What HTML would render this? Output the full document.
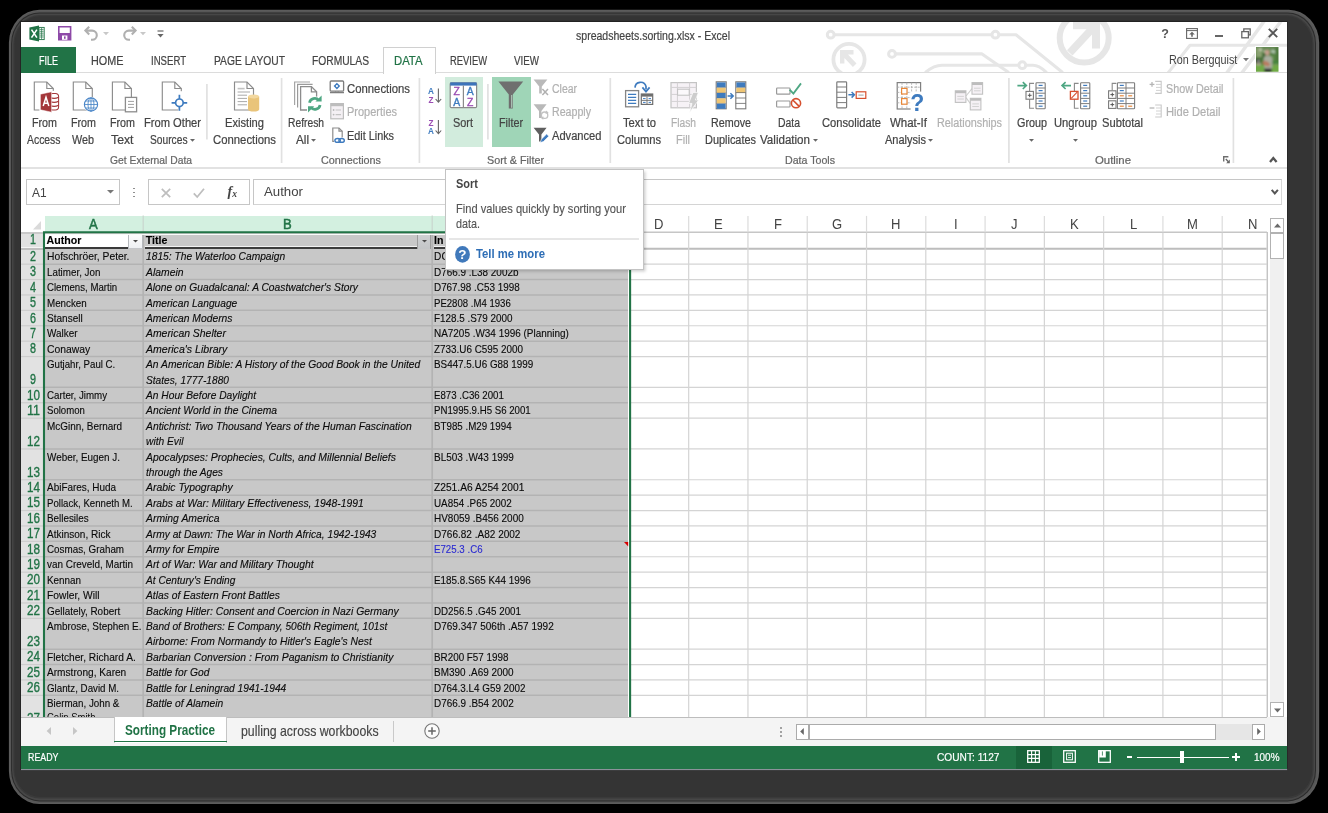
<!DOCTYPE html>
<html><head><meta charset="utf-8"><title>Excel</title>
<style>
html,body{margin:0;padding:0;background:#000;}
body{width:1328px;height:813px;position:relative;overflow:hidden;font-family:"Liberation Sans",sans-serif;}
.t{position:absolute;white-space:nowrap;margin:0;padding:0;}
.r{position:absolute;box-sizing:border-box;}
svg{overflow:visible}
</style></head><body><div id="root" style="position:absolute;left:0;top:0;width:1328px;height:813px;will-change:transform;">
<svg class="r" style="left:0;top:0" width="1328" height="813" viewBox="0 0 1328 813"><rect x="8.90" y="9.80" width="1310.30" height="794.20" rx="30.5" ry="33.0" fill="#5c5c5c"/><rect x="9.80" y="11.00" width="1307.80" height="792.10" rx="29.7" ry="32.2" fill="#575757"/><rect x="11.10" y="12.40" width="1304.90" height="789.00" rx="28.5" ry="31.0" fill="#2b2b2b"/><rect x="12.10" y="13.40" width="1302.90" height="787.00" rx="27.5" ry="30.0" fill="#474747"/><rect x="13.30" y="15.00" width="1300.30" height="783.40" rx="26.5" ry="29.0" fill="#3a3a3a"/><rect x="14.50" y="16.20" width="1297.70" height="780.80" rx="25.5" ry="28.0" fill="#343434"/><rect x="20.2" y="20.9" width="1267.4" height="749" fill="#222222"/><rect x="21" y="768.8" width="1266.2" height="1.3" fill="#8c929a"/></svg>
<div class="r" style="left:21.00px;top:22.00px;width:1266.00px;height:747.00px;background:#ffffff;"></div>
<svg class="r" style="left:21px;top:22px;overflow:hidden" width="1266" height="51" viewBox="21 22 1266 51"><g><g fill="none" stroke="#e6e6e6" stroke-width="3.1" stroke-linecap="round" stroke-linejoin="round">
<path d="M834.5 34.7 H991.5 M999.3 34.7 H1016 L1062 72"/>
<circle cx="830.7" cy="34.7" r="3.4" stroke-width="3"/>
<circle cx="995.4" cy="34.7" r="3.4" stroke-width="3"/>
<path d="M896 53.9 H982 L1008 72"/>
<circle cx="892" cy="53.9" r="3.4" stroke-width="3"/>
<path d="M926 72 Q934 65.2 942 65.2 H1018.5 M1026 65.2 H1033 Q1039 65.2 1046 72"/>
<circle cx="1022.3" cy="65.2" r="3.4" stroke-width="3"/>
<circle cx="849" cy="59.5" r="15.6" stroke-width="3.8"/>
<circle cx="1084.2" cy="38" r="24.5" stroke-width="6"/>
<path d="M1168 73 L1190 45.3 H1288" stroke-width="3"/>
<path d="M1226 74 L1265 20" stroke-width="3.4"/>
<path d="M1241 74 L1282 20" stroke-width="3.4"/>
</g>
<g fill="#e6e6e6" stroke="none">
<path d="M840 50 h13.5 v4.5 h-5.5 l8.5 9 -3.6 3.4 -8.5 -9 v5.6 h-4.4z"/>
<path d="M1073 22 h27 v26.5 h-8 v-14 l-19.5 21 -5.5 -5.2 19.5 -21 h-13.5z"/>
</g></g></svg>
<div class="t" style="left:576.00px;top:27.60px;font-size:12px;line-height:16px;color:#444;font-weight:normal;font-style:normal;transform:scaleX(0.8780);transform-origin:0 50%;-webkit-text-stroke:0.2px;">spreadsheets.sorting.xlsx - Excel</div>
<svg class="r" style="left:29.40px;top:24.60px;" width="16" height="17" viewBox="0 0 16 17"><path d="M0.4 2.4 L10 0.4 V16.6 L0.4 14.6Z" fill="#217346"/>
<rect x="10" y="2.4" width="5.2" height="12.2" fill="#fff" stroke="#217346" stroke-width="0.9"/>
<path d="M10.6 4.4h4M10.6 6.3h4M10.6 8.2h4M10.6 10.1h4M10.6 12h4M12.6 2.8v11.4" stroke="#217346" stroke-width="0.7"/>
<path d="M2.5 4.6 L7.9 12.6 M7.9 4.6 L2.5 12.6" stroke="#fff" stroke-width="1.6"/></svg>
<svg class="r" style="left:58.00px;top:26.00px;" width="14" height="15" viewBox="0 0 14 15"><path d="M0.8 0.8 H12.6 V13.8 H0.8Z" fill="#fff" stroke="#8e4aa8" stroke-width="1.6"/>
<rect x="0.8" y="7" width="11.8" height="6.8" fill="#8e4aa8"/><rect x="4" y="9.5" width="5.4" height="4.3" fill="#fff"/><rect x="6" y="10.4" width="1.6" height="2.4" fill="#8e4aa8"/></svg>
<svg class="r" style="left:84.00px;top:26.00px;" width="16" height="16" viewBox="0 0 16 16"><path d="M1.5 4.6 H8.2 A4.6 4.6 0 0 1 8.2 13.8 H7" fill="none" stroke="#b0b0b0" stroke-width="2.1"/><path d="M5.2 0.8 L1.4 4.6 L5.2 8.4" fill="none" stroke="#b0b0b0" stroke-width="2.1"/></svg>
<svg class="r" style="left:103.00px;top:32.00px;" width="6" height="4" viewBox="0 0 6 4"><path d="M0 0H6L3 3.2Z" fill="#c8c8c8"/></svg>
<svg class="r" style="left:121.00px;top:26.00px;" width="16" height="16" viewBox="0 0 16 16"><path d="M14.5 4.6 H7.8 A4.6 4.6 0 0 0 7.8 13.8 H9" fill="none" stroke="#b0b0b0" stroke-width="2.1"/><path d="M10.8 0.8 L14.6 4.6 L10.8 8.4" fill="none" stroke="#b0b0b0" stroke-width="2.1"/></svg>
<svg class="r" style="left:140.00px;top:32.00px;" width="6" height="4" viewBox="0 0 6 4"><path d="M0 0H6L3 3.2Z" fill="#c8c8c8"/></svg>
<svg class="r" style="left:157.00px;top:30.00px;" width="7" height="9" viewBox="0 0 7 9"><path d="M0.5 1H6.5" stroke="#666" stroke-width="1.2"/><path d="M0.4 4H6.6L3.5 7.4Z" fill="#666"/></svg>
<div class="t" style="left:1161.18px;top:26.00px;font-size:12.5px;line-height:16px;color:#555;font-weight:bold;font-style:normal;">?</div>
<svg class="r" style="left:1186.00px;top:28.00px;" width="12" height="11" viewBox="0 0 12 11"><rect x="0.6" y="0.6" width="10.8" height="9.8" fill="#fff" stroke="#666" stroke-width="1.1"/><path d="M0.6 2.6H11.4" stroke="#666" stroke-width="1"/><path d="M6 3.8 L8.8 6.6 H6.8 V8.8 H5.2 V6.6 H3.2Z" fill="#666"/></svg>
<div class="r" style="left:1214.50px;top:34.50px;width:8.50px;height:2.00px;background:#666;"></div>
<svg class="r" style="left:1241.00px;top:28.00px;" width="10" height="11" viewBox="0 0 10 11"><rect x="2.8" y="0.9" width="6.4" height="6" fill="none" stroke="#666" stroke-width="1.3"/><rect x="0.8" y="3.6" width="6.6" height="6.2" fill="#fff" stroke="#666" stroke-width="1.3"/></svg>
<svg class="r" style="left:1268.20px;top:28.20px;" width="10" height="10" viewBox="0 0 10 10"><path d="M0.8 0.8L9.2 9.2M9.2 0.8L0.8 9.2" stroke="#555" stroke-width="1.9"/></svg>
<div class="t" style="left:1168.80px;top:51.50px;font-size:12.2px;line-height:16px;color:#444;font-weight:normal;font-style:normal;transform:scaleX(0.8848);transform-origin:0 50%;">Ron Bergquist</div>
<svg class="r" style="left:1243.00px;top:58.00px;" width="6" height="4" viewBox="0 0 6 4"><path d="M0 0H6L3 3.2Z" fill="#777"/></svg>
<div class="r" style="left:1254.50px;top:46.30px;width:24.50px;height:26.80px;background:#ffffff;"></div>
<svg class="r" style="left:1255.50px;top:47.30px;" width="22.5" height="24.8" viewBox="0 0 22.5 24.8"><defs><filter id="avb" x="-5%" y="-5%" width="110%" height="110%"><feGaussianBlur stdDeviation="0.8"/></filter><clipPath id="avc"><rect width="22.5" height="24.8"/></clipPath></defs>
<g clip-path="url(#avc)"><g filter="url(#avb)">
<rect x="-2" y="-2" width="27" height="29" fill="#4f7a3c"/>
<rect x="-2" y="-2" width="27" height="7" fill="#668a55"/><rect x="5" y="6" width="5" height="6" fill="#3f6a34"/><rect x="13" y="8" width="6" height="6" fill="#5d8d4a"/>
<rect x="0" y="1" width="6" height="9" fill="#88a070"/>
<rect x="3.5" y="1.5" width="2" height="2.4" fill="#d9dcc8"/><rect x="7.5" y="3.4" width="1.6" height="2" fill="#cfd4bd"/>
<rect x="15" y="3" width="5" height="3" fill="#a9c1a6"/><rect x="18.5" y="4.5" width="1.6" height="2.4" fill="#e4ebe4"/>
<rect x="19" y="0" width="4" height="16" fill="#4d7a3c"/>
<rect x="0" y="12" width="3.6" height="4" fill="#1f241c"/><rect x="1.6" y="13.3" width="1.4" height="1.6" fill="#e8e8e8"/>
<rect x="17" y="14.5" width="6" height="2.6" fill="#3f8a3a"/>
<rect x="16" y="17.6" width="7" height="1.6" fill="#c7a7a0"/>
<rect x="-1" y="18" width="25" height="8" fill="#6faa45"/>
<rect x="0" y="16" width="5" height="2.4" fill="#a8a58a"/>
<ellipse cx="11.3" cy="5.6" rx="2.3" ry="2.9" fill="#c79f8f"/>
<path d="M7.6 11 Q9 8.4 11.4 8.8 Q15.6 8.4 16.4 11.6 L16 22 H8.6Z" fill="#a9ad9f"/>
<path d="M6.2 15 L10 13.8 L14 16.6 L13.4 19.4 L8 18.6Z" fill="#b97c61"/>
<rect x="8.4" y="21.6" width="7.2" height="3.6" fill="#26262a"/>
</g></g></svg>
<div class="r" style="left:21.00px;top:47.20px;width:55.00px;height:25.80px;background:#217346;"></div>
<div class="r" style="left:76.00px;top:71.80px;width:1211.00px;height:1.60px;background:#dcdcdc;"></div>
<div class="r" style="left:382.60px;top:46.80px;width:53.20px;height:27.00px;background:#ffffff;border:1px solid #d0d0d0;border-bottom:none;"></div>
<div class="t" style="left:38.80px;top:52.60px;font-size:12.3px;line-height:16px;color:#ffffff;font-weight:normal;font-style:normal;transform:scaleX(0.7314);transform-origin:0 50%;-webkit-text-stroke:0.22px;">FILE</div>
<div class="t" style="left:91.20px;top:52.60px;font-size:12.3px;line-height:16px;color:#444444;font-weight:normal;font-style:normal;transform:scaleX(0.8808);transform-origin:0 50%;-webkit-text-stroke:0.22px;">HOME</div>
<div class="t" style="left:151.10px;top:52.60px;font-size:12.3px;line-height:16px;color:#444444;font-weight:normal;font-style:normal;transform:scaleX(0.7798);transform-origin:0 50%;-webkit-text-stroke:0.22px;">INSERT</div>
<div class="t" style="left:213.50px;top:52.60px;font-size:12.3px;line-height:16px;color:#444444;font-weight:normal;font-style:normal;transform:scaleX(0.8354);transform-origin:0 50%;-webkit-text-stroke:0.22px;">PAGE LAYOUT</div>
<div class="t" style="left:312.00px;top:52.60px;font-size:12.3px;line-height:16px;color:#444444;font-weight:normal;font-style:normal;transform:scaleX(0.8340);transform-origin:0 50%;-webkit-text-stroke:0.22px;">FORMULAS</div>
<div class="t" style="left:393.80px;top:52.60px;font-size:12.3px;line-height:16px;color:#217346;font-weight:normal;font-style:normal;transform:scaleX(0.9199);transform-origin:0 50%;-webkit-text-stroke:0.22px;">DATA</div>
<div class="t" style="left:450.30px;top:52.60px;font-size:12.3px;line-height:16px;color:#444444;font-weight:normal;font-style:normal;transform:scaleX(0.7625);transform-origin:0 50%;-webkit-text-stroke:0.22px;">REVIEW</div>
<div class="t" style="left:513.60px;top:52.60px;font-size:12.3px;line-height:16px;color:#444444;font-weight:normal;font-style:normal;transform:scaleX(0.7953);transform-origin:0 50%;-webkit-text-stroke:0.22px;">VIEW</div>
<div class="r" style="left:21.00px;top:166.80px;width:1266.00px;height:2.20px;background:#e2e2e2;"></div>
<svg class="r" style="left:0;top:0" width="1328" height="813" viewBox="0 0 1328 813"><path d="M281.6 78V163" stroke="#e1e1e1" stroke-width="1.7"/><path d="M419.4 78V163" stroke="#e1e1e1" stroke-width="1.7"/><path d="M610.3 78V163" stroke="#e1e1e1" stroke-width="1.7"/><path d="M1008.9 78V163" stroke="#e1e1e1" stroke-width="1.7"/><path d="M1233.4 78V163" stroke="#e1e1e1" stroke-width="1.7"/><path d="M206.9 84V139.5" stroke="#e1e1e1" stroke-width="1.7"/><path d="M487.9 84V139.5" stroke="#e1e1e1" stroke-width="1.7"/></svg>
<div class="r" style="left:444.50px;top:76.50px;width:38.60px;height:70.50px;background:#d2ecdd;"></div>
<div class="r" style="left:492.00px;top:76.50px;width:38.50px;height:70.50px;background:#9fd5b7;"></div>
<div class="t" style="left:31.50px;top:115.20px;font-size:12.5px;line-height:16px;color:#444444;font-weight:normal;font-style:normal;transform:scaleX(0.8573);transform-origin:0 50%;-webkit-text-stroke:0.22px;">From</div>
<div class="t" style="left:27.25px;top:131.50px;font-size:12.5px;line-height:16px;color:#444444;font-weight:normal;font-style:normal;transform:scaleX(0.8315);transform-origin:0 50%;-webkit-text-stroke:0.22px;">Access</div>
<div class="t" style="left:70.50px;top:115.20px;font-size:12.5px;line-height:16px;color:#444444;font-weight:normal;font-style:normal;transform:scaleX(0.8573);transform-origin:0 50%;-webkit-text-stroke:0.22px;">From</div>
<div class="t" style="left:72.00px;top:131.50px;font-size:12.5px;line-height:16px;color:#444444;font-weight:normal;font-style:normal;transform:scaleX(0.8636);transform-origin:0 50%;-webkit-text-stroke:0.22px;">Web</div>
<div class="t" style="left:109.50px;top:115.20px;font-size:12.5px;line-height:16px;color:#444444;font-weight:normal;font-style:normal;transform:scaleX(0.8573);transform-origin:0 50%;-webkit-text-stroke:0.22px;">From</div>
<div class="t" style="left:110.75px;top:131.50px;font-size:12.5px;line-height:16px;color:#444444;font-weight:normal;font-style:normal;transform:scaleX(0.9815);transform-origin:0 50%;-webkit-text-stroke:0.22px;">Text</div>
<div class="t" style="left:143.50px;top:115.20px;font-size:12.5px;line-height:16px;color:#444444;font-weight:normal;font-style:normal;transform:scaleX(0.8920);transform-origin:0 50%;-webkit-text-stroke:0.22px;">From Other</div>
<div class="t" style="left:149.75px;top:131.50px;font-size:12.5px;line-height:16px;color:#444444;font-weight:normal;font-style:normal;transform:scaleX(0.8178);transform-origin:0 50%;-webkit-text-stroke:0.22px;">Sources</div>
<svg class="r" style="left:189.75px;top:139.00px;" width="5" height="3" viewBox="0 0 5 3"><path d="M0 0H5L2.5 2.8Z" fill="#666"/></svg>
<div class="t" style="left:224.50px;top:115.20px;font-size:12.5px;line-height:16px;color:#444444;font-weight:normal;font-style:normal;transform:scaleX(0.8911);transform-origin:0 50%;-webkit-text-stroke:0.22px;">Existing</div>
<div class="t" style="left:212.50px;top:131.50px;font-size:12.5px;line-height:16px;color:#444444;font-weight:normal;font-style:normal;transform:scaleX(0.9067);transform-origin:0 50%;-webkit-text-stroke:0.22px;">Connections</div>
<div class="t" style="left:287.50px;top:115.20px;font-size:12.5px;line-height:16px;color:#444444;font-weight:normal;font-style:normal;transform:scaleX(0.8225);transform-origin:0 50%;-webkit-text-stroke:0.22px;">Refresh</div>
<div class="t" style="left:295.50px;top:131.50px;font-size:12.5px;line-height:16px;color:#444444;font-weight:normal;font-style:normal;transform:scaleX(0.9359);transform-origin:0 50%;-webkit-text-stroke:0.22px;">All</div>
<svg class="r" style="left:311.00px;top:139.00px;" width="5" height="3" viewBox="0 0 5 3"><path d="M0 0H5L2.5 2.8Z" fill="#666"/></svg>
<div class="t" style="left:453.00px;top:115.20px;font-size:12.5px;line-height:16px;color:#444444;font-weight:normal;font-style:normal;transform:scaleX(0.8724);transform-origin:0 50%;-webkit-text-stroke:0.22px;">Sort</div>
<div class="t" style="left:499.00px;top:115.20px;font-size:12.5px;line-height:16px;color:#444444;font-weight:normal;font-style:normal;transform:scaleX(0.8640);transform-origin:0 50%;-webkit-text-stroke:0.22px;">Filter</div>
<div class="t" style="left:622.50px;top:115.20px;font-size:12.5px;line-height:16px;color:#444444;font-weight:normal;font-style:normal;transform:scaleX(0.8962);transform-origin:0 50%;-webkit-text-stroke:0.22px;">Text to</div>
<div class="t" style="left:617.00px;top:131.50px;font-size:12.5px;line-height:16px;color:#444444;font-weight:normal;font-style:normal;transform:scaleX(0.8921);transform-origin:0 50%;-webkit-text-stroke:0.22px;">Columns</div>
<div class="t" style="left:670.50px;top:115.20px;font-size:12.5px;line-height:16px;color:#b1b1b1;font-weight:normal;font-style:normal;transform:scaleX(0.8179);transform-origin:0 50%;-webkit-text-stroke:0.22px;">Flash</div>
<div class="t" style="left:676.00px;top:131.50px;font-size:12.5px;line-height:16px;color:#b1b1b1;font-weight:normal;font-style:normal;transform:scaleX(0.8769);transform-origin:0 50%;-webkit-text-stroke:0.22px;">Fill</div>
<div class="t" style="left:710.50px;top:115.20px;font-size:12.5px;line-height:16px;color:#444444;font-weight:normal;font-style:normal;transform:scaleX(0.8594);transform-origin:0 50%;-webkit-text-stroke:0.22px;">Remove</div>
<div class="t" style="left:705.00px;top:131.50px;font-size:12.5px;line-height:16px;color:#444444;font-weight:normal;font-style:normal;transform:scaleX(0.8739);transform-origin:0 50%;-webkit-text-stroke:0.22px;">Duplicates</div>
<div class="t" style="left:777.50px;top:115.20px;font-size:12.5px;line-height:16px;color:#444444;font-weight:normal;font-style:normal;transform:scaleX(0.8332);transform-origin:0 50%;-webkit-text-stroke:0.22px;">Data</div>
<div class="t" style="left:760.00px;top:131.50px;font-size:12.5px;line-height:16px;color:#444444;font-weight:normal;font-style:normal;transform:scaleX(0.9264);transform-origin:0 50%;-webkit-text-stroke:0.22px;">Validation</div>
<svg class="r" style="left:812.50px;top:139.00px;" width="5" height="3" viewBox="0 0 5 3"><path d="M0 0H5L2.5 2.8Z" fill="#666"/></svg>
<div class="t" style="left:822.00px;top:115.20px;font-size:12.5px;line-height:16px;color:#444444;font-weight:normal;font-style:normal;transform:scaleX(0.8938);transform-origin:0 50%;-webkit-text-stroke:0.22px;">Consolidate</div>
<div class="t" style="left:890.00px;top:115.20px;font-size:12.5px;line-height:16px;color:#444444;font-weight:normal;font-style:normal;transform:scaleX(0.9185);transform-origin:0 50%;-webkit-text-stroke:0.22px;">What-If</div>
<div class="t" style="left:884.50px;top:131.50px;font-size:12.5px;line-height:16px;color:#444444;font-weight:normal;font-style:normal;transform:scaleX(0.8809);transform-origin:0 50%;-webkit-text-stroke:0.22px;">Analysis</div>
<svg class="r" style="left:928.00px;top:139.00px;" width="5" height="3" viewBox="0 0 5 3"><path d="M0 0H5L2.5 2.8Z" fill="#666"/></svg>
<div class="t" style="left:937.00px;top:115.20px;font-size:12.5px;line-height:16px;color:#b1b1b1;font-weight:normal;font-style:normal;transform:scaleX(0.8662);transform-origin:0 50%;-webkit-text-stroke:0.22px;">Relationships</div>
<div class="t" style="left:1016.50px;top:115.20px;font-size:12.5px;line-height:16px;color:#444444;font-weight:normal;font-style:normal;transform:scaleX(0.8635);transform-origin:0 50%;-webkit-text-stroke:0.22px;">Group</div>
<svg class="r" style="left:1029.00px;top:138.50px;" width="5" height="3" viewBox="0 0 5 3"><path d="M0 0H5L2.5 2.8Z" fill="#666"/></svg>
<div class="t" style="left:1054.00px;top:115.20px;font-size:12.5px;line-height:16px;color:#444444;font-weight:normal;font-style:normal;transform:scaleX(0.8968);transform-origin:0 50%;-webkit-text-stroke:0.22px;">Ungroup</div>
<svg class="r" style="left:1073.00px;top:138.50px;" width="5" height="3" viewBox="0 0 5 3"><path d="M0 0H5L2.5 2.8Z" fill="#666"/></svg>
<div class="t" style="left:1101.50px;top:115.20px;font-size:12.5px;line-height:16px;color:#444444;font-weight:normal;font-style:normal;transform:scaleX(0.8939);transform-origin:0 50%;-webkit-text-stroke:0.22px;">Subtotal</div>
<div class="t" style="left:347.00px;top:80.60px;font-size:12.5px;line-height:16px;color:#444444;font-weight:normal;font-style:normal;transform:scaleX(0.9067);transform-origin:0 50%;-webkit-text-stroke:0.22px;">Connections</div>
<div class="t" style="left:347.00px;top:104.40px;font-size:12.5px;line-height:16px;color:#b1b1b1;font-weight:normal;font-style:normal;transform:scaleX(0.8777);transform-origin:0 50%;-webkit-text-stroke:0.22px;">Properties</div>
<div class="t" style="left:347.00px;top:128.00px;font-size:12.5px;line-height:16px;color:#444444;font-weight:normal;font-style:normal;transform:scaleX(0.8673);transform-origin:0 50%;-webkit-text-stroke:0.22px;">Edit Links</div>
<div class="t" style="left:551.50px;top:80.60px;font-size:12.5px;line-height:16px;color:#b1b1b1;font-weight:normal;font-style:normal;transform:scaleX(0.8370);transform-origin:0 50%;-webkit-text-stroke:0.22px;">Clear</div>
<div class="t" style="left:551.50px;top:104.40px;font-size:12.5px;line-height:16px;color:#b1b1b1;font-weight:normal;font-style:normal;transform:scaleX(0.8504);transform-origin:0 50%;-webkit-text-stroke:0.22px;">Reapply</div>
<div class="t" style="left:551.50px;top:128.00px;font-size:12.5px;line-height:16px;color:#444444;font-weight:normal;font-style:normal;transform:scaleX(0.8904);transform-origin:0 50%;-webkit-text-stroke:0.22px;">Advanced</div>
<div class="t" style="left:1165.50px;top:80.60px;font-size:12.5px;line-height:16px;color:#b1b1b1;font-weight:normal;font-style:normal;transform:scaleX(0.8621);transform-origin:0 50%;-webkit-text-stroke:0.22px;">Show Detail</div>
<div class="t" style="left:1165.50px;top:104.40px;font-size:12.5px;line-height:16px;color:#b1b1b1;font-weight:normal;font-style:normal;transform:scaleX(0.8915);transform-origin:0 50%;-webkit-text-stroke:0.22px;">Hide Detail</div>
<div class="t" style="left:110.00px;top:152.60px;font-size:11px;line-height:14px;color:#666666;font-weight:normal;font-style:normal;transform:scaleX(0.9379);transform-origin:0 50%;-webkit-text-stroke:0.22px;">Get External Data</div>
<div class="t" style="left:320.50px;top:152.60px;font-size:11px;line-height:14px;color:#666666;font-weight:normal;font-style:normal;transform:scaleX(0.9812);transform-origin:0 50%;-webkit-text-stroke:0.22px;">Connections</div>
<div class="t" style="left:486.50px;top:152.60px;font-size:11px;line-height:14px;color:#666666;font-weight:normal;font-style:normal;transform:scaleX(0.9816);transform-origin:0 50%;-webkit-text-stroke:0.22px;">Sort &amp; Filter</div>
<div class="t" style="left:784.50px;top:152.60px;font-size:11px;line-height:14px;color:#666666;font-weight:normal;font-style:normal;transform:scaleX(0.9658);transform-origin:0 50%;-webkit-text-stroke:0.22px;">Data Tools</div>
<div class="t" style="left:1095.00px;top:152.60px;font-size:11px;line-height:14px;color:#666666;font-weight:normal;font-style:normal;transform:scaleX(1.0330);transform-origin:0 50%;-webkit-text-stroke:0.22px;">Outline</div>
<svg class="r" style="left:1223.00px;top:156.20px;" width="7" height="7.4" viewBox="0 0 7 7.4"><path d="M0.7 5.4V0.7H5.4" fill="none" stroke="#6e6e6e" stroke-width="1.4"/><path d="M2.8 3L5.4 5.8" fill="none" stroke="#666" stroke-width="1.3"/><path d="M6.8 3.6V7.2H3.2Z" fill="#666"/></svg>
<svg class="r" style="left:1269.30px;top:155.60px;" width="8.6" height="7" viewBox="0 0 8.6 7"><path d="M1 6L4.3 2L7.6 6" fill="none" stroke="#555" stroke-width="2.3"/></svg>
<svg class="r" style="left:0;top:0" width="1328" height="813" viewBox="0 0 1328 813"><path d="M34.3 82H46.8L53.3 88.5V110H34.3Z" fill="#fff" stroke="#8c8c8c" stroke-width="1.15" stroke-linejoin="miter"/><path d="M46.8 82V88.5H53.3" fill="none" stroke="#8c8c8c" stroke-width="1.15"/><rect x="39.4" y="90.8" width="20.6" height="22.4" fill="#fff"/><rect x="49.6" y="93.4" width="9" height="16.6" rx="3.2" fill="#fff" stroke="#a4373a" stroke-width="1.05"/><path d="M49.6 97.2 Q54.1 99.6 58.6 97.2 M49.6 101.2 Q54.1 103.6 58.6 101.2 M49.6 105.2 Q54.1 107.6 58.6 105.2" fill="none" stroke="#a4373a" stroke-width="1.05"/><path d="M40.4 94.2 L51.6 91.8 V112.2 L40.4 109.8Z" fill="#a4373a" stroke="#fff" stroke-width="0.5"/><path d="M43.2 106 L46 97.2 L48.8 106 M44.2 103.2H47.8" fill="none" stroke="#fff" stroke-width="1.5"/><path d="M73.3 82H85.8L92.3 88.5V110H73.3Z" fill="#fff" stroke="#8c8c8c" stroke-width="1.15" stroke-linejoin="miter"/><path d="M85.8 82V88.5H92.3" fill="none" stroke="#8c8c8c" stroke-width="1.15"/><circle cx="91" cy="104.5" r="7.6" fill="#fff"/><circle cx="91" cy="104.5" r="6.6" fill="#fff" stroke="#4a86c8" stroke-width="1.15"/><ellipse cx="91" cy="104.5" rx="3" ry="6.6" fill="none" stroke="#4a86c8" stroke-width="0.85"/><path d="M84.4 104.5H97.6M85.6 101H96.4M85.6 108H96.4M91 97.9V111.1" stroke="#4a86c8" stroke-width="0.85"/><path d="M112.4 82H124.9L131.4 88.5V110H112.4Z" fill="#fff" stroke="#8c8c8c" stroke-width="1.15" stroke-linejoin="miter"/><path d="M124.9 82V88.5H131.4" fill="none" stroke="#8c8c8c" stroke-width="1.15"/><rect x="125.4" y="97.4" width="11.2" height="14.4" fill="#fff" stroke="#8c8c8c" stroke-width="1.3"/><path d="M128 101.4H134M128 104.4H134M128 107.4H134" stroke="#a0a0a0" stroke-width="1"/><path d="M162.3 82H174.8L181.3 88.5V110H162.3Z" fill="#fff" stroke="#8c8c8c" stroke-width="1.15" stroke-linejoin="miter"/><path d="M174.8 82V88.5H181.3" fill="none" stroke="#8c8c8c" stroke-width="1.15"/><rect x="178.2" y="91.2" width="10" height="20.4" fill="#fff"/><circle cx="179.4" cy="102.8" r="3.8" fill="#fff" stroke="#3e7bbf" stroke-width="1.7"/><path d="M179.4 94.8V99M179.4 106.6V110.8M171.6 102.8H175.6M183.2 102.8H187.2" stroke="#3e7bbf" stroke-width="1.7"/><path d="M234.5 82H247.0L253.5 88.5V110H234.5Z" fill="#fff" stroke="#8c8c8c" stroke-width="1.15" stroke-linejoin="miter"/><path d="M247.0 82V88.5H253.5" fill="none" stroke="#8c8c8c" stroke-width="1.15"/><path d="M237.6 88.6H244.6" stroke="#c2c2c2" stroke-width="1.6"/><path d="M237.6 92H250M237.6 95.2H247M237.6 98.4H247M237.6 101.6H247M237.6 104.8H247" stroke="#a9a9a9" stroke-width="1"/><path d="M248 96.4 V109.6 A5.6 2 0 0 0 259.2 109.6 V96.4Z" fill="#e9c47a"/><ellipse cx="253.6" cy="96.4" rx="5.6" ry="2" fill="#f3d89f"/><path d="M294.6 105V82H310" fill="none" stroke="#a5a5a5" stroke-width="1.2"/><path d="M297.6 107.5V84.4H312.6" fill="none" stroke="#9a9a9a" stroke-width="1.2"/><path d="M300.6 86.6H311.40000000000003L316.6 91.8V110.0H300.6Z" fill="#fff" stroke="#8c8c8c" stroke-width="1.3" stroke-linejoin="miter"/><path d="M311.40000000000003 86.6V91.8H316.6" fill="none" stroke="#8c8c8c" stroke-width="1.3"/><rect x="307" y="96.6" width="15.4" height="15" fill="#fff"/><path d="M309.5 102.8 A5.3 5.3 0 0 1 318.8 100.4" fill="none" stroke="#4ea783" stroke-width="2.7"/><path d="M315.4 101.6H321.6V95.4Z" fill="#4ea783"/><path d="M320.1 105 A5.3 5.3 0 0 1 310.8 107.4" fill="none" stroke="#4ea783" stroke-width="2.7"/><path d="M314.2 106.2H308V112.4Z" fill="#4ea783"/><rect x="330.2" y="81" width="13.4" height="10.2" rx="1" fill="#fff" stroke="#7d7d7d" stroke-width="1.3"/><path d="M330 92.6H344M335.6 91.4V92.6M338.2 91.4V92.6" stroke="#7d7d7d" stroke-width="1.3"/><path d="M336.9 82.8 L340.2 86.1 L336.9 89.4 L333.6 86.1Z" fill="#3e7bbf"/><circle cx="336.9" cy="86.1" r="1.1" fill="#fff"/><rect x="330.8" y="103.6" width="12.6" height="15.2" fill="#f4f0f4" stroke="#bdbdbd" stroke-width="1.2"/><rect x="330.8" y="103.6" width="12.6" height="2.6" fill="#bdbdbd"/><path d="M335.6 110H341M335.6 114.6H341" stroke="#c4c4c4" stroke-width="1.2"/><circle cx="333.6" cy="110" r="0.9" fill="#b9b9b9"/><circle cx="333.6" cy="114.6" r="0.9" fill="#b9b9b9"/><path d="M332.8 128H339.0L342.2 131.2V141.4H332.8Z" fill="#fff" stroke="#8c8c8c" stroke-width="1.2" stroke-linejoin="miter"/><path d="M339.0 128V131.2H342.2" fill="none" stroke="#8c8c8c" stroke-width="1.2"/><rect x="334" y="137.4" width="12" height="6.4" fill="#fff"/><ellipse cx="337.6" cy="140.4" rx="2.7" ry="1.9" fill="none" stroke="#3e7bbf" stroke-width="1.4"/><ellipse cx="341.6" cy="140.4" rx="2.7" ry="1.9" fill="none" stroke="#3e7bbf" stroke-width="1.4"/><text x="431" y="94.4" font-family="Liberation Sans" font-size="8.2" font-weight="bold" fill="#3e7bbf" text-anchor="middle">A</text><text x="431" y="102.80000000000001" font-family="Liberation Sans" font-size="8.2" font-weight="bold" fill="#9a4db3" text-anchor="middle">Z</text><path d="M438.4 88.4V102.0M435.6 99.0L438.4 102.2L441.2 99.0" fill="none" stroke="#666" stroke-width="1.1"/><text x="431" y="125.9" font-family="Liberation Sans" font-size="8.2" font-weight="bold" fill="#9a4db3" text-anchor="middle">Z</text><text x="431" y="134.3" font-family="Liberation Sans" font-size="8.2" font-weight="bold" fill="#3e7bbf" text-anchor="middle">A</text><path d="M438.4 119.9V133.5M435.6 130.5L438.4 133.70000000000002L441.2 130.5" fill="none" stroke="#666" stroke-width="1.1"/><rect x="450.2" y="82.8" width="26.4" height="24.8" rx="1.2" fill="#fff" stroke="#8a8a8a" stroke-width="1.2"/><rect x="450.2" y="82.4" width="26.4" height="3.2" fill="#3c74ba"/><path d="M463.4 85.6V107.6" stroke="#8a8a8a" stroke-width="1.2"/><text x="456.7" y="95.4" font-family="Liberation Sans" font-size="10.4" fill="#9a4db3" stroke="#9a4db3" stroke-width="0.35" text-anchor="middle">Z</text><text x="456.7" y="106" font-family="Liberation Sans" font-size="10.4" fill="#3e7bbf" stroke="#3e7bbf" stroke-width="0.35" text-anchor="middle">A</text><text x="470.1" y="95.4" font-family="Liberation Sans" font-size="10.4" fill="#3e7bbf" stroke="#3e7bbf" stroke-width="0.35" text-anchor="middle">A</text><text x="470.1" y="106" font-family="Liberation Sans" font-size="10.4" fill="#9a4db3" stroke="#9a4db3" stroke-width="0.35" text-anchor="middle">Z</text><path d="M498.4 81.6H523.2L512.8 94.4V108.6H508.8V94.4Z" fill="#6f6f6f"/><path d="M511.7 95V107.8" fill="none" stroke="#b5cfc0" stroke-width="1"/><path d="M533.6 79.4H547.4L541.8 86.4V93.6H539.2V86.4Z" fill="#b9b9b9"/><path d="M542.4 89L548 95M548 89L542.4 95" stroke="#b0b0b0" stroke-width="1.5"/><path d="M533.6 104.2H546.6L541.4 111V118H539V111Z" fill="#b9b9b9"/><circle cx="544.6" cy="115.2" r="3.2" fill="#fff" stroke="#c2c2c2" stroke-width="1.3"/><path d="M546 110.6L548.6 112.6L545.6 114Z" fill="#c2c2c2"/><path d="M543.2 119.8L540.6 117.8L543.6 116.4Z" fill="#c2c2c2"/><path d="M533.6 127.8H546.6L541.4 134.6V141.6H539V134.6Z" fill="#5f5f5f"/><path d="M540.4 142.6L541.2 139.4L546.6 134L548.8 136.2L543.4 141.6Z" fill="#3e7bbf" stroke="#fff" stroke-width="0.6"/><rect x="625.6" y="90.6" width="13" height="16.2" fill="#fff" stroke="#858585" stroke-width="1.3"/><path d="M628 94.4H636.2M628 97.4H636.2M628 100.4H636.2M628 103.4H636.2" stroke="#3e7bbf" stroke-width="1.1"/><rect x="641.3" y="94" width="11.4" height="10.4" fill="#fff" stroke="#6e6e6e" stroke-width="1.2"/><rect x="641.3" y="94" width="11.4" height="2.6" fill="#6e6e6e"/><path d="M647 96.6V104.4M641.3 100.4H652.7" stroke="#6e6e6e" stroke-width="0.9"/><path d="M643 98.6H645.6M648.6 98.6H651M643 102.4H645.6M648.6 102.4H651" stroke="#3e7bbf" stroke-width="1"/><path d="M635 87.6 A5.6 5.6 0 0 1 646 86.4 V89.6" fill="none" stroke="#3e7bbf" stroke-width="1.7"/><path d="M642.4 87.4L646 91.6L649.6 87.4" fill="none" stroke="#3e7bbf" stroke-width="1.7"/><rect x="671" y="82.6" width="25.4" height="25.2" fill="#f6f2f6" stroke="#c4c4c4" stroke-width="1.2"/><path d="M671 87.4H696.4M671 94.4H696.4M671 101.4H696.4M677.4 82.6V107.8M689.6 82.6V107.8" stroke="#d3d0d3" stroke-width="1"/><rect x="677.6" y="89.2" width="11.6" height="6" fill="#fbf9fb" stroke="#c0c0c0" stroke-width="1"/><path d="M693 92.4H698.4L695.4 100H698.6L689.6 112.4L692 103.4H688.6Z" fill="#cdcdcd" stroke="#fff" stroke-width="0.7"/><rect x="716.2" y="81.8" width="10" height="27" fill="#fff" stroke="#7a7a7a" stroke-width="1.1"/><rect x="716.8000000000001" y="82.40" width="8.8" height="5.2" fill="#3e7bbf"/><rect x="716.8000000000001" y="87.70" width="8.8" height="5.2" fill="#f0c674"/><rect x="716.8000000000001" y="93.00" width="8.8" height="5.2" fill="#3e7bbf"/><rect x="716.8000000000001" y="98.30" width="8.8" height="5.2" fill="#f0c674"/><rect x="716.8000000000001" y="103.60" width="8.8" height="5.2" fill="#3e7bbf"/><path d="M716.2 87.20H726.2" stroke="#6a6a6a" stroke-width="0.9" opacity="0.35"/><path d="M716.2 92.60H726.2" stroke="#6a6a6a" stroke-width="0.9" opacity="0.35"/><path d="M716.2 98.00H726.2" stroke="#6a6a6a" stroke-width="0.9" opacity="0.35"/><path d="M716.2 103.40H726.2" stroke="#6a6a6a" stroke-width="0.9" opacity="0.35"/><rect x="735.8" y="81.8" width="10" height="27" fill="#fff" stroke="#7a7a7a" stroke-width="1.1"/><rect x="736.4" y="82.40" width="8.8" height="5.2" fill="#3e7bbf"/><rect x="736.4" y="87.70" width="8.8" height="5.2" fill="#f0c674"/><path d="M735.8 87.20H745.8" stroke="#6a6a6a" stroke-width="0.9" opacity="0.35"/><path d="M735.8 92.60H745.8" stroke="#6a6a6a" stroke-width="0.9" opacity="0.9"/><path d="M735.8 98.00H745.8" stroke="#6a6a6a" stroke-width="0.9" opacity="0.9"/><path d="M735.8 103.40H745.8" stroke="#6a6a6a" stroke-width="0.9" opacity="0.9"/><path d="M727.6 96H732.6M730.4 93.2L733.2 96L730.4 98.8" fill="none" stroke="#3e7bbf" stroke-width="1.5"/><rect x="776.6" y="88" width="13.4" height="6.2" rx="0.8" fill="#fff" stroke="#9a9a9a" stroke-width="1.2"/><rect x="776.6" y="101" width="13.4" height="6" rx="0.8" fill="#fff" stroke="#9a9a9a" stroke-width="1.2"/><path d="M789.6 89.6L793.4 93.6L801 83.4" fill="none" stroke="#4ea783" stroke-width="1.8"/><circle cx="796" cy="103.2" r="4.6" fill="#fff" stroke="#d6502f" stroke-width="1.6"/><path d="M792.8 100L799.2 106.4" stroke="#d6502f" stroke-width="1.6"/><rect x="836.8" y="81.8" width="9.8" height="26" rx="0.8" fill="#fff" stroke="#7d7d7d" stroke-width="1.2"/><path d="M836.8 87H846.6M836.8 92.2H846.6M836.8 97.4H846.6M836.8 102.6H846.6" stroke="#7d7d7d" stroke-width="1"/><path d="M848.4 94.8H854M851.6 92L854.4 94.8L851.6 97.6" fill="none" stroke="#3e7bbf" stroke-width="1.5"/><rect x="856.2" y="91.8" width="9.6" height="6.6" fill="#fff" stroke="#d6502f" stroke-width="1.2"/><path d="M858.4 95.1H863.6" stroke="#a0a0a0" stroke-width="1"/><rect x="897.2" y="82.6" width="23.4" height="26.4" fill="#fff" stroke="#808080" stroke-width="1.2"/><path d="M897.2 87.2H920.6M897.2 92.4H920.6M897.2 97.6H920.6M897.2 102.8H920.6M902 82.6V109M906.8 82.6V109M911.6 82.6V109M916.2 82.6V109" stroke="#a8a8a8" stroke-width="0.8" stroke-dasharray="2.2 1.2"/><rect x="901.6" y="88.4" width="5.4" height="5.6" fill="#fff" stroke="#e8883a" stroke-width="1.2"/><rect x="901.6" y="98.6" width="5.4" height="5.6" fill="#fff" stroke="#e8883a" stroke-width="1.2"/><rect x="910.6" y="91.6" width="13.6" height="20.6" fill="#fff"/><text x="917.4" y="110.6" font-family="Liberation Sans" font-size="23" font-weight="bold" fill="#3e7bbf" text-anchor="middle">?</text><path d="M966 96 L972 88.6 M966 97.6 L970.4 103.6" stroke="#cfcfcf" stroke-width="1.1"/><rect x="955.3" y="90.8" width="10.6" height="11.6" fill="#f5f1f5" stroke="#c2c2c2" stroke-width="1.1"/><rect x="955.3" y="90.8" width="10.6" height="2.4" fill="#bdbdbd"/><path d="M957.3 96.39999999999999H963.9M957.3 99.0H963.9" stroke="#cfcfcf" stroke-width="0.9"/><rect x="972" y="82.6" width="10.6" height="11.6" fill="#f5f1f5" stroke="#c2c2c2" stroke-width="1.1"/><rect x="972" y="82.6" width="10.6" height="2.4" fill="#bdbdbd"/><path d="M974 88.19999999999999H980.6M974 90.8H980.6" stroke="#cfcfcf" stroke-width="0.9"/><rect x="970.3" y="98.3" width="10.6" height="11.6" fill="#f5f1f5" stroke="#c2c2c2" stroke-width="1.1"/><rect x="970.3" y="98.3" width="10.6" height="2.4" fill="#bdbdbd"/><path d="M972.3 103.89999999999999H978.9M972.3 106.5H978.9" stroke="#cfcfcf" stroke-width="0.9"/><rect x="1036" y="82.8" width="9.2" height="26" rx="0.8" fill="#fff" stroke="#7d7d7d" stroke-width="1.1"/><path d="M1036 88H1045.2M1036 93.2H1045.2M1036 98.4H1045.2M1036 103.6H1045.2" stroke="#7d7d7d" stroke-width="1"/><path d="M1038.6 85.4H1042.6000000000001" stroke="#3e7bbf" stroke-width="1.2"/><path d="M1038.6 90.6H1042.6000000000001" stroke="#3e7bbf" stroke-width="1.2"/><path d="M1038.6 95.8H1042.6000000000001" stroke="#3e7bbf" stroke-width="1.2"/><path d="M1038.6 101.0H1042.6000000000001" stroke="#3e7bbf" stroke-width="1.2"/><path d="M1038.6 106.2H1042.6000000000001" stroke="#3e7bbf" stroke-width="1.2"/><path d="M1034 83.4H1029.6V108.2H1034" fill="none" stroke="#8a8a8a" stroke-width="1.1"/><rect x="1026" y="91.4" width="7.4" height="7.8" fill="#fff" stroke="#7a7a7a" stroke-width="1.1"/><path d="M1027.8 95.3H1031.6M1029.7 93.4V97.2" stroke="#555" stroke-width="1"/><path d="M1017.4 85.6H1026M1022.8 82.2L1026.4 85.6L1022.8 89" fill="none" stroke="#4ea783" stroke-width="1.6"/><rect x="1080.6" y="82.8" width="9.2" height="26" rx="0.8" fill="#fff" stroke="#7d7d7d" stroke-width="1.1"/><path d="M1080.6 88H1089.8M1080.6 93.2H1089.8M1080.6 98.4H1089.8M1080.6 103.6H1089.8" stroke="#7d7d7d" stroke-width="1"/><path d="M1083.1999999999998 85.4H1087.2" stroke="#3e7bbf" stroke-width="1.2"/><path d="M1083.1999999999998 90.6H1087.2" stroke="#3e7bbf" stroke-width="1.2"/><path d="M1083.1999999999998 95.8H1087.2" stroke="#3e7bbf" stroke-width="1.2"/><path d="M1083.1999999999998 101.0H1087.2" stroke="#3e7bbf" stroke-width="1.2"/><path d="M1083.1999999999998 106.2H1087.2" stroke="#3e7bbf" stroke-width="1.2"/><path d="M1078.6 83.4H1074.4V108.2H1078.6" fill="none" stroke="#8a8a8a" stroke-width="1.1"/><rect x="1070.4" y="91.4" width="7.6" height="7.8" fill="#fff" stroke="#d6502f" stroke-width="1.3"/><path d="M1071.2 98.4L1077.2 92.2" stroke="#d6502f" stroke-width="1.1"/><path d="M1071 85.6H1062.4M1065.6 82.2L1062 85.6L1065.6 89" fill="none" stroke="#4ea783" stroke-width="1.6"/><rect x="1117.4" y="82.8" width="17.2" height="26" rx="0.8" fill="#fff" stroke="#7d7d7d" stroke-width="1.1"/><path d="M1117.4 88H1134.6M1117.4 93.2H1134.6M1117.4 98.4H1134.6M1117.4 103.6H1134.6M1126 82.8V108.8" stroke="#7d7d7d" stroke-width="1"/><path d="M1119.8 85.4H1123.8" stroke="#3e7bbf" stroke-width="1.2"/><path d="M1119.8 90.6H1123.8" stroke="#3e7bbf" stroke-width="1.2"/><path d="M1119.8 95.8H1123.8" stroke="#e8883a" stroke-width="1.2"/><path d="M1128.2 95.8H1132.2" stroke="#e8883a" stroke-width="1.2"/><path d="M1119.8 101.0H1123.8" stroke="#3e7bbf" stroke-width="1.2"/><path d="M1119.8 106.2H1123.8" stroke="#e8883a" stroke-width="1.2"/><path d="M1128.2 106.2H1132.2" stroke="#e8883a" stroke-width="1.2"/><path d="M1116.4 83.4H1112.2V90.6" fill="none" stroke="#8a8a8a" stroke-width="1.1"/><rect x="1108.6" y="90.8" width="7.4" height="7.6" fill="#fff" stroke="#7a7a7a" stroke-width="1.1"/><path d="M1110.4 94.6H1114.2M1112.3 92.7V96.5" stroke="#555" stroke-width="1"/><rect x="1108.6" y="100.8" width="7.4" height="7.6" fill="#fff" stroke="#7a7a7a" stroke-width="1.1"/><path d="M1110.4 104.6H1114.2M1112.3 102.7V106.5" stroke="#555" stroke-width="1"/><path d="M1155.2 81.39999999999999H1161.2V93.39999999999999H1155.2" fill="none" stroke="#c9c9c9" stroke-width="1.1"/><path d="M1156 84.39999999999999H1161M1156 87.39999999999999H1161M1156 90.39999999999999H1161" stroke="#d3d3d3" stroke-width="1"/><path d="M1149.6 84.39999999999999H1154.4" stroke="#b5b5b5" stroke-width="1.3"/><path d="M1152 82.0V86.8" stroke="#b5b5b5" stroke-width="1.3"/><path d="M1155.2 105.0H1161.2V117.0H1155.2" fill="none" stroke="#c9c9c9" stroke-width="1.1"/><path d="M1156 108.0H1161M1156 111.0H1161M1156 114.0H1161" stroke="#d3d3d3" stroke-width="1"/><path d="M1149.6 108.0H1154.4" stroke="#b5b5b5" stroke-width="1.3"/></svg>
<div class="r" style="left:26.00px;top:179.00px;width:94.00px;height:25.60px;background:#fff;border:1px solid #c6c6c6;"></div>
<div class="t" style="left:32.30px;top:183.80px;font-size:13px;line-height:17px;color:#444;font-weight:normal;font-style:normal;transform:scaleX(0.9182);transform-origin:0 50%;">A1</div>
<svg class="r" style="left:106.50px;top:190.00px;" width="7" height="4" viewBox="0 0 7 4"><path d="M0 0H7L3.5 3.6Z" fill="#777"/></svg>
<div class="r" style="left:133.00px;top:187.60px;width:1.90px;height:1.90px;background:#8f8f8f;"></div>
<div class="r" style="left:133.00px;top:191.60px;width:1.90px;height:1.90px;background:#8f8f8f;"></div>
<div class="r" style="left:133.00px;top:195.60px;width:1.90px;height:1.90px;background:#8f8f8f;"></div>
<div class="r" style="left:148.00px;top:179.00px;width:101.50px;height:25.60px;background:#fff;border:1px solid #c6c6c6;"></div>
<svg class="r" style="left:160.50px;top:187.50px;" width="10" height="10" viewBox="0 0 10 10"><path d="M0.8 0.8L9.2 9.2M9.2 0.8L0.8 9.2" stroke="#bebebe" stroke-width="1.7"/></svg>
<svg class="r" style="left:193.00px;top:187.50px;" width="12" height="10" viewBox="0 0 12 10"><path d="M0.8 5.4L4.2 9L11 0.8" fill="none" stroke="#bebebe" stroke-width="1.8"/></svg>
<div class="t" style="left:227.40px;top:182.80px;font-size:14px;line-height:18px;color:#444;font-weight:bold;font-style:italic;font-family:'Liberation Serif',serif;">f</div>
<div class="t" style="left:232.20px;top:188.40px;font-size:9.5px;line-height:12px;color:#444;font-weight:bold;font-style:italic;font-family:'Liberation Serif',serif;">x</div>
<div class="r" style="left:253.00px;top:179.00px;width:1029.00px;height:25.60px;background:#fff;border:1px solid #c6c6c6;border-right-color:#d8d8d8;border-bottom-color:#d4d4d4;"></div>
<div class="t" style="left:264.00px;top:184.30px;font-size:12.5px;line-height:16px;color:#444;font-weight:normal;font-style:normal;transform:scaleX(1.0590);transform-origin:0 50%;">Author</div>
<svg class="r" style="left:1270.90px;top:188.90px;" width="7.6" height="6" viewBox="0 0 7.6 6"><path d="M0.7 0.9L3.8 4.5L6.9 0.9" fill="none" stroke="#555" stroke-width="2"/></svg>
<div class="r" style="left:21.00px;top:215.60px;width:1246.00px;height:16.70px;background:#ffffff;"></div>
<div class="r" style="left:44.60px;top:215.60px;width:584.80px;height:17.20px;background:#d3f0e0;"></div>
<div class="r" style="left:21.00px;top:232.30px;width:22.30px;height:484.90px;background:#e2e2e2;"></div>
<div class="r" style="left:43.30px;top:232.30px;width:1223.70px;height:484.90px;background:#ffffff;"></div>
<div class="r" style="left:43.30px;top:232.30px;width:586.10px;height:484.90px;background:#c8c8c8;"></div>
<div class="r" style="left:45.00px;top:234.00px;width:83.40px;height:13.60px;background:#ffffff;"></div>
<svg class="r" style="left:0;top:0" width="1328" height="813" viewBox="0 0 1328 813"><path d="M629.40 248.75L1267.00 248.75" stroke="#bdbdbd" stroke-width="1.8"/><path d="M629.40 264.15L1267.00 264.15" stroke="#d4d4d4" stroke-width="1.2"/><path d="M629.40 279.55L1267.00 279.55" stroke="#d4d4d4" stroke-width="1.2"/><path d="M629.40 294.95L1267.00 294.95" stroke="#d4d4d4" stroke-width="1.2"/><path d="M629.40 310.35L1267.00 310.35" stroke="#d4d4d4" stroke-width="1.2"/><path d="M629.40 325.75L1267.00 325.75" stroke="#d4d4d4" stroke-width="1.2"/><path d="M629.40 341.15L1267.00 341.15" stroke="#d4d4d4" stroke-width="1.2"/><path d="M629.40 356.55L1267.00 356.55" stroke="#d4d4d4" stroke-width="1.2"/><path d="M629.40 387.35L1267.00 387.35" stroke="#d4d4d4" stroke-width="1.2"/><path d="M629.40 402.75L1267.00 402.75" stroke="#d4d4d4" stroke-width="1.2"/><path d="M629.40 418.15L1267.00 418.15" stroke="#d4d4d4" stroke-width="1.2"/><path d="M629.40 448.95L1267.00 448.95" stroke="#d4d4d4" stroke-width="1.2"/><path d="M629.40 479.75L1267.00 479.75" stroke="#d4d4d4" stroke-width="1.2"/><path d="M629.40 495.15L1267.00 495.15" stroke="#d4d4d4" stroke-width="1.2"/><path d="M629.40 510.55L1267.00 510.55" stroke="#d4d4d4" stroke-width="1.2"/><path d="M629.40 525.95L1267.00 525.95" stroke="#d4d4d4" stroke-width="1.2"/><path d="M629.40 541.35L1267.00 541.35" stroke="#d4d4d4" stroke-width="1.2"/><path d="M629.40 556.75L1267.00 556.75" stroke="#d4d4d4" stroke-width="1.2"/><path d="M629.40 572.15L1267.00 572.15" stroke="#d4d4d4" stroke-width="1.2"/><path d="M629.40 587.55L1267.00 587.55" stroke="#d4d4d4" stroke-width="1.2"/><path d="M629.40 602.95L1267.00 602.95" stroke="#d4d4d4" stroke-width="1.2"/><path d="M629.40 618.35L1267.00 618.35" stroke="#d4d4d4" stroke-width="1.2"/><path d="M629.40 649.15L1267.00 649.15" stroke="#d4d4d4" stroke-width="1.2"/><path d="M629.40 664.55L1267.00 664.55" stroke="#d4d4d4" stroke-width="1.2"/><path d="M629.40 679.95L1267.00 679.95" stroke="#d4d4d4" stroke-width="1.2"/><path d="M629.40 695.35L1267.00 695.35" stroke="#d4d4d4" stroke-width="1.2"/><path d="M688.68 232.30L688.68 717.20" stroke="#d4d4d4" stroke-width="1.2"/><path d="M747.96 232.30L747.96 717.20" stroke="#d4d4d4" stroke-width="1.2"/><path d="M807.24 232.30L807.24 717.20" stroke="#d4d4d4" stroke-width="1.2"/><path d="M866.52 232.30L866.52 717.20" stroke="#d4d4d4" stroke-width="1.2"/><path d="M925.80 232.30L925.80 717.20" stroke="#d4d4d4" stroke-width="1.2"/><path d="M985.08 232.30L985.08 717.20" stroke="#d4d4d4" stroke-width="1.2"/><path d="M1044.36 232.30L1044.36 717.20" stroke="#d4d4d4" stroke-width="1.2"/><path d="M1103.64 232.30L1103.64 717.20" stroke="#d4d4d4" stroke-width="1.2"/><path d="M1162.92 232.30L1162.92 717.20" stroke="#d4d4d4" stroke-width="1.2"/><path d="M1222.20 232.30L1222.20 717.20" stroke="#d4d4d4" stroke-width="1.2"/><path d="M1267.00 232.30L1267.00 717.20" stroke="#d4d4d4" stroke-width="1.2"/><path d="M629.40 232.30L1267.00 232.30" stroke="#c6c6c6" stroke-width="1.4"/><path d="M688.68 215.90L688.68 232.30" stroke="#dcdcdc" stroke-width="1.2"/><path d="M747.96 215.90L747.96 232.30" stroke="#dcdcdc" stroke-width="1.2"/><path d="M807.24 215.90L807.24 232.30" stroke="#dcdcdc" stroke-width="1.2"/><path d="M866.52 215.90L866.52 232.30" stroke="#dcdcdc" stroke-width="1.2"/><path d="M925.80 215.90L925.80 232.30" stroke="#dcdcdc" stroke-width="1.2"/><path d="M985.08 215.90L985.08 232.30" stroke="#dcdcdc" stroke-width="1.2"/><path d="M1044.36 215.90L1044.36 232.30" stroke="#dcdcdc" stroke-width="1.2"/><path d="M1103.64 215.90L1103.64 232.30" stroke="#dcdcdc" stroke-width="1.2"/><path d="M1162.92 215.90L1162.92 232.30" stroke="#dcdcdc" stroke-width="1.2"/><path d="M1222.20 215.90L1222.20 232.30" stroke="#dcdcdc" stroke-width="1.2"/><path d="M143.20 215.60L143.20 231.70" stroke="#c9d6ce" stroke-width="1.2"/><path d="M432.20 215.60L432.20 231.70" stroke="#c9d6ce" stroke-width="1.2"/><path d="M43.30 264.15L629.40 264.15" stroke="#b3b3b3" stroke-width="1.5"/><path d="M43.30 279.55L629.40 279.55" stroke="#b3b3b3" stroke-width="1.5"/><path d="M43.30 294.95L629.40 294.95" stroke="#b3b3b3" stroke-width="1.5"/><path d="M43.30 310.35L629.40 310.35" stroke="#b3b3b3" stroke-width="1.5"/><path d="M43.30 325.75L629.40 325.75" stroke="#b3b3b3" stroke-width="1.5"/><path d="M43.30 341.15L629.40 341.15" stroke="#b3b3b3" stroke-width="1.5"/><path d="M43.30 356.55L629.40 356.55" stroke="#b3b3b3" stroke-width="1.5"/><path d="M43.30 387.35L629.40 387.35" stroke="#b3b3b3" stroke-width="1.5"/><path d="M43.30 402.75L629.40 402.75" stroke="#b3b3b3" stroke-width="1.5"/><path d="M43.30 418.15L629.40 418.15" stroke="#b3b3b3" stroke-width="1.5"/><path d="M43.30 448.95L629.40 448.95" stroke="#b3b3b3" stroke-width="1.5"/><path d="M43.30 479.75L629.40 479.75" stroke="#b3b3b3" stroke-width="1.5"/><path d="M43.30 495.15L629.40 495.15" stroke="#b3b3b3" stroke-width="1.5"/><path d="M43.30 510.55L629.40 510.55" stroke="#b3b3b3" stroke-width="1.5"/><path d="M43.30 525.95L629.40 525.95" stroke="#b3b3b3" stroke-width="1.5"/><path d="M43.30 541.35L629.40 541.35" stroke="#b3b3b3" stroke-width="1.5"/><path d="M43.30 556.75L629.40 556.75" stroke="#b3b3b3" stroke-width="1.5"/><path d="M43.30 572.15L629.40 572.15" stroke="#b3b3b3" stroke-width="1.5"/><path d="M43.30 587.55L629.40 587.55" stroke="#b3b3b3" stroke-width="1.5"/><path d="M43.30 602.95L629.40 602.95" stroke="#b3b3b3" stroke-width="1.5"/><path d="M43.30 618.35L629.40 618.35" stroke="#b3b3b3" stroke-width="1.5"/><path d="M43.30 649.15L629.40 649.15" stroke="#b3b3b3" stroke-width="1.5"/><path d="M43.30 664.55L629.40 664.55" stroke="#b3b3b3" stroke-width="1.5"/><path d="M43.30 679.95L629.40 679.95" stroke="#b3b3b3" stroke-width="1.5"/><path d="M43.30 695.35L629.40 695.35" stroke="#b3b3b3" stroke-width="1.5"/><path d="M143.20 234.30L143.20 717.20" stroke="#b3b3b3" stroke-width="1.7"/><path d="M432.20 234.30L432.20 717.20" stroke="#b3b3b3" stroke-width="1.7"/><path d="M21.00 248.75L43.30 248.75" stroke="#cdcdcd" stroke-width="1.2"/><path d="M21.00 264.15L43.30 264.15" stroke="#cdcdcd" stroke-width="1.2"/><path d="M21.00 279.55L43.30 279.55" stroke="#cdcdcd" stroke-width="1.2"/><path d="M21.00 294.95L43.30 294.95" stroke="#cdcdcd" stroke-width="1.2"/><path d="M21.00 310.35L43.30 310.35" stroke="#cdcdcd" stroke-width="1.2"/><path d="M21.00 325.75L43.30 325.75" stroke="#cdcdcd" stroke-width="1.2"/><path d="M21.00 341.15L43.30 341.15" stroke="#cdcdcd" stroke-width="1.2"/><path d="M21.00 356.55L43.30 356.55" stroke="#cdcdcd" stroke-width="1.2"/><path d="M21.00 387.35L43.30 387.35" stroke="#cdcdcd" stroke-width="1.2"/><path d="M21.00 402.75L43.30 402.75" stroke="#cdcdcd" stroke-width="1.2"/><path d="M21.00 418.15L43.30 418.15" stroke="#cdcdcd" stroke-width="1.2"/><path d="M21.00 448.95L43.30 448.95" stroke="#cdcdcd" stroke-width="1.2"/><path d="M21.00 479.75L43.30 479.75" stroke="#cdcdcd" stroke-width="1.2"/><path d="M21.00 495.15L43.30 495.15" stroke="#cdcdcd" stroke-width="1.2"/><path d="M21.00 510.55L43.30 510.55" stroke="#cdcdcd" stroke-width="1.2"/><path d="M21.00 525.95L43.30 525.95" stroke="#cdcdcd" stroke-width="1.2"/><path d="M21.00 541.35L43.30 541.35" stroke="#cdcdcd" stroke-width="1.2"/><path d="M21.00 556.75L43.30 556.75" stroke="#cdcdcd" stroke-width="1.2"/><path d="M21.00 572.15L43.30 572.15" stroke="#cdcdcd" stroke-width="1.2"/><path d="M21.00 587.55L43.30 587.55" stroke="#cdcdcd" stroke-width="1.2"/><path d="M21.00 602.95L43.30 602.95" stroke="#cdcdcd" stroke-width="1.2"/><path d="M21.00 618.35L43.30 618.35" stroke="#cdcdcd" stroke-width="1.2"/><path d="M21.00 649.15L43.30 649.15" stroke="#cdcdcd" stroke-width="1.2"/><path d="M21.00 664.55L43.30 664.55" stroke="#cdcdcd" stroke-width="1.2"/><path d="M21.00 679.95L43.30 679.95" stroke="#cdcdcd" stroke-width="1.2"/><path d="M21.00 695.35L43.30 695.35" stroke="#cdcdcd" stroke-width="1.2"/></svg>
<div class="r" style="left:21.00px;top:232.00px;width:21.70px;height:1.60px;background:#c9c9c9;"></div>
<div class="r" style="left:21.00px;top:247.00px;width:21.70px;height:1.00px;background:#f4f4f4;"></div>
<div class="r" style="left:21.00px;top:248.00px;width:21.70px;height:1.70px;background:#bfbfbf;"></div>
<div class="r" style="left:45.00px;top:247.10px;width:83.40px;height:1.80px;background:#3a3a3a;"></div>
<div class="r" style="left:144.50px;top:247.10px;width:272.60px;height:1.80px;background:#3c3c3c;"></div>
<div class="r" style="left:433.50px;top:247.10px;width:194.50px;height:1.80px;background:#3c3c3c;"></div>
<div class="r" style="left:128.40px;top:234.40px;width:14.40px;height:14.20px;background:#f4f5f7;border-left:1.2px solid #b6b9bd;border-right:1.2px solid #b6b9bd;border-bottom:1px solid #c4c6ca;background:linear-gradient(#fdfdfd,#eef0f3);"></div>
<svg class="r" style="left:133.00px;top:240.20px;" width="5" height="3" viewBox="0 0 5 3"><path d="M0 0H5L2.5 2.6Z" fill="#4a4a4a"/></svg>
<div class="r" style="left:417.10px;top:234.40px;width:14.40px;height:14.20px;background:#c9cbcd;border-left:1.2px solid #9c9c9c;border-right:1.2px solid #9c9c9c;background:linear-gradient(#cfd1d3,#c3c5c7);"></div>
<svg class="r" style="left:421.70px;top:240.20px;" width="5" height="3" viewBox="0 0 5 3"><path d="M0 0H5L2.5 2.6Z" fill="#4a4a4a"/></svg>
<div class="r" style="left:45.20px;top:233.60px;width:583.00px;height:1.00px;background:#fafafa;"></div>
<div class="r" style="left:144.50px;top:246.00px;width:272.60px;height:1.20px;background:#f2f2f2;"></div>
<div class="r" style="left:433.50px;top:246.00px;width:194.50px;height:1.20px;background:#f2f2f2;"></div>
<svg class="r" style="left:0;top:0" width="1328" height="813" viewBox="0 0 1328 813"><path d="M44 717.2V232.2H630.1V717.2" fill="none" stroke="#217346" stroke-width="2.1"/></svg>
<div class="r" style="left:628.00px;top:233.40px;width:1.10px;height:483.80px;background:#ffffff;"></div>
<svg class="r" style="left:33.20px;top:220.60px;" width="8" height="8.4" viewBox="0 0 8 8.4"><path d="M8 0V8.4H0Z" fill="#dadada"/></svg>
<div class="t" style="left:88.89px;top:215.20px;font-size:14.2px;line-height:18px;color:#217346;font-weight:normal;font-style:normal;transform:scaleX(0.9200);transform-origin:0 50%;-webkit-text-stroke:0.5px #217346;">A</div>
<div class="t" style="left:283.34px;top:215.20px;font-size:14.2px;line-height:18px;color:#217346;font-weight:normal;font-style:normal;transform:scaleX(0.9200);transform-origin:0 50%;-webkit-text-stroke:0.5px #217346;">B</div>
<div class="t" style="left:526.08px;top:215.20px;font-size:14.2px;line-height:18px;color:#217346;font-weight:normal;font-style:normal;transform:scaleX(0.9200);transform-origin:0 50%;-webkit-text-stroke:0.5px #217346;">C</div>
<div class="t" style="left:654.32px;top:215.20px;font-size:14.2px;line-height:18px;color:#444;font-weight:normal;font-style:normal;transform:scaleX(0.9200);transform-origin:0 50%;">D</div>
<div class="t" style="left:713.96px;top:215.20px;font-size:14.2px;line-height:18px;color:#444;font-weight:normal;font-style:normal;transform:scaleX(0.9200);transform-origin:0 50%;">E</div>
<div class="t" style="left:773.61px;top:215.20px;font-size:14.2px;line-height:18px;color:#444;font-weight:normal;font-style:normal;transform:scaleX(0.9200);transform-origin:0 50%;">F</div>
<div class="t" style="left:831.80px;top:215.20px;font-size:14.2px;line-height:18px;color:#444;font-weight:normal;font-style:normal;transform:scaleX(0.9200);transform-origin:0 50%;">G</div>
<div class="t" style="left:891.44px;top:215.20px;font-size:14.2px;line-height:18px;color:#444;font-weight:normal;font-style:normal;transform:scaleX(0.9200);transform-origin:0 50%;">H</div>
<div class="t" style="left:953.63px;top:215.20px;font-size:14.2px;line-height:18px;color:#444;font-weight:normal;font-style:normal;transform:scaleX(0.9200);transform-origin:0 50%;">I</div>
<div class="t" style="left:1011.45px;top:215.20px;font-size:14.2px;line-height:18px;color:#444;font-weight:normal;font-style:normal;transform:scaleX(0.9200);transform-origin:0 50%;">J</div>
<div class="t" style="left:1069.64px;top:215.20px;font-size:14.2px;line-height:18px;color:#444;font-weight:normal;font-style:normal;transform:scaleX(0.9200);transform-origin:0 50%;">K</div>
<div class="t" style="left:1129.65px;top:215.20px;font-size:14.2px;line-height:18px;color:#444;font-weight:normal;font-style:normal;transform:scaleX(0.9200);transform-origin:0 50%;">L</div>
<div class="t" style="left:1187.12px;top:215.20px;font-size:14.2px;line-height:18px;color:#444;font-weight:normal;font-style:normal;transform:scaleX(0.9200);transform-origin:0 50%;">M</div>
<div class="t" style="left:1247.68px;top:215.20px;font-size:14.2px;line-height:18px;color:#444;font-weight:normal;font-style:normal;transform:scaleX(0.9200);transform-origin:0 50%;">N</div>
<div class="t" style="left:30.00px;top:229.80px;font-size:14.8px;line-height:19px;color:#217346;font-weight:normal;font-style:normal;transform:scaleX(0.7289);transform-origin:0 50%;-webkit-text-stroke:0.35px #217346;">1</div>
<div class="t" style="left:30.00px;top:247.05px;font-size:14.8px;line-height:19px;color:#217346;font-weight:normal;font-style:normal;transform:scaleX(0.7289);transform-origin:0 50%;-webkit-text-stroke:0.35px #217346;">2</div>
<div class="t" style="left:30.00px;top:262.45px;font-size:14.8px;line-height:19px;color:#217346;font-weight:normal;font-style:normal;transform:scaleX(0.7289);transform-origin:0 50%;-webkit-text-stroke:0.35px #217346;">3</div>
<div class="t" style="left:30.00px;top:277.85px;font-size:14.8px;line-height:19px;color:#217346;font-weight:normal;font-style:normal;transform:scaleX(0.7289);transform-origin:0 50%;-webkit-text-stroke:0.35px #217346;">4</div>
<div class="t" style="left:30.00px;top:293.25px;font-size:14.8px;line-height:19px;color:#217346;font-weight:normal;font-style:normal;transform:scaleX(0.7289);transform-origin:0 50%;-webkit-text-stroke:0.35px #217346;">5</div>
<div class="t" style="left:30.00px;top:308.65px;font-size:14.8px;line-height:19px;color:#217346;font-weight:normal;font-style:normal;transform:scaleX(0.7289);transform-origin:0 50%;-webkit-text-stroke:0.35px #217346;">6</div>
<div class="t" style="left:30.00px;top:324.05px;font-size:14.8px;line-height:19px;color:#217346;font-weight:normal;font-style:normal;transform:scaleX(0.7289);transform-origin:0 50%;-webkit-text-stroke:0.35px #217346;">7</div>
<div class="t" style="left:30.00px;top:339.45px;font-size:14.8px;line-height:19px;color:#217346;font-weight:normal;font-style:normal;transform:scaleX(0.7289);transform-origin:0 50%;-webkit-text-stroke:0.35px #217346;">8</div>
<div class="t" style="left:30.00px;top:370.25px;font-size:14.8px;line-height:19px;color:#217346;font-weight:normal;font-style:normal;transform:scaleX(0.7289);transform-origin:0 50%;-webkit-text-stroke:0.35px #217346;">9</div>
<div class="t" style="left:26.50px;top:385.65px;font-size:14.8px;line-height:19px;color:#217346;font-weight:normal;font-style:normal;transform:scaleX(0.7897);transform-origin:0 50%;-webkit-text-stroke:0.35px #217346;">10</div>
<div class="t" style="left:26.50px;top:401.05px;font-size:14.8px;line-height:19px;color:#217346;font-weight:normal;font-style:normal;transform:scaleX(0.8461);transform-origin:0 50%;-webkit-text-stroke:0.35px #217346;">11</div>
<div class="t" style="left:26.50px;top:431.85px;font-size:14.8px;line-height:19px;color:#217346;font-weight:normal;font-style:normal;transform:scaleX(0.7897);transform-origin:0 50%;-webkit-text-stroke:0.35px #217346;">12</div>
<div class="t" style="left:26.50px;top:462.65px;font-size:14.8px;line-height:19px;color:#217346;font-weight:normal;font-style:normal;transform:scaleX(0.7897);transform-origin:0 50%;-webkit-text-stroke:0.35px #217346;">13</div>
<div class="t" style="left:26.50px;top:478.05px;font-size:14.8px;line-height:19px;color:#217346;font-weight:normal;font-style:normal;transform:scaleX(0.7897);transform-origin:0 50%;-webkit-text-stroke:0.35px #217346;">14</div>
<div class="t" style="left:26.50px;top:493.45px;font-size:14.8px;line-height:19px;color:#217346;font-weight:normal;font-style:normal;transform:scaleX(0.7897);transform-origin:0 50%;-webkit-text-stroke:0.35px #217346;">15</div>
<div class="t" style="left:26.50px;top:508.85px;font-size:14.8px;line-height:19px;color:#217346;font-weight:normal;font-style:normal;transform:scaleX(0.7897);transform-origin:0 50%;-webkit-text-stroke:0.35px #217346;">16</div>
<div class="t" style="left:26.50px;top:524.25px;font-size:14.8px;line-height:19px;color:#217346;font-weight:normal;font-style:normal;transform:scaleX(0.7897);transform-origin:0 50%;-webkit-text-stroke:0.35px #217346;">17</div>
<div class="t" style="left:26.50px;top:539.65px;font-size:14.8px;line-height:19px;color:#217346;font-weight:normal;font-style:normal;transform:scaleX(0.7897);transform-origin:0 50%;-webkit-text-stroke:0.35px #217346;">18</div>
<div class="t" style="left:26.50px;top:555.05px;font-size:14.8px;line-height:19px;color:#217346;font-weight:normal;font-style:normal;transform:scaleX(0.7897);transform-origin:0 50%;-webkit-text-stroke:0.35px #217346;">19</div>
<div class="t" style="left:26.50px;top:570.45px;font-size:14.8px;line-height:19px;color:#217346;font-weight:normal;font-style:normal;transform:scaleX(0.7897);transform-origin:0 50%;-webkit-text-stroke:0.35px #217346;">20</div>
<div class="t" style="left:26.50px;top:585.85px;font-size:14.8px;line-height:19px;color:#217346;font-weight:normal;font-style:normal;transform:scaleX(0.7897);transform-origin:0 50%;-webkit-text-stroke:0.35px #217346;">21</div>
<div class="t" style="left:26.50px;top:601.25px;font-size:14.8px;line-height:19px;color:#217346;font-weight:normal;font-style:normal;transform:scaleX(0.7897);transform-origin:0 50%;-webkit-text-stroke:0.35px #217346;">22</div>
<div class="t" style="left:26.50px;top:632.05px;font-size:14.8px;line-height:19px;color:#217346;font-weight:normal;font-style:normal;transform:scaleX(0.7897);transform-origin:0 50%;-webkit-text-stroke:0.35px #217346;">23</div>
<div class="t" style="left:26.50px;top:647.45px;font-size:14.8px;line-height:19px;color:#217346;font-weight:normal;font-style:normal;transform:scaleX(0.7897);transform-origin:0 50%;-webkit-text-stroke:0.35px #217346;">24</div>
<div class="t" style="left:26.50px;top:662.85px;font-size:14.8px;line-height:19px;color:#217346;font-weight:normal;font-style:normal;transform:scaleX(0.7897);transform-origin:0 50%;-webkit-text-stroke:0.35px #217346;">25</div>
<div class="t" style="left:26.50px;top:678.25px;font-size:14.8px;line-height:19px;color:#217346;font-weight:normal;font-style:normal;transform:scaleX(0.7897);transform-origin:0 50%;-webkit-text-stroke:0.35px #217346;">26</div>
<div class="t" style="left:26.50px;top:709.05px;font-size:14.8px;line-height:19px;color:#217346;font-weight:normal;font-style:normal;transform:scaleX(0.7897);transform-origin:0 50%;-webkit-text-stroke:0.35px #217346;">27</div>
<div class="t" style="left:46.60px;top:233.20px;font-size:10.6px;line-height:14px;color:#000;font-weight:bold;font-style:normal;-webkit-text-stroke:0.12px;">Author</div>
<div class="t" style="left:145.70px;top:233.20px;font-size:10.6px;line-height:14px;color:#000;font-weight:bold;font-style:normal;-webkit-text-stroke:0.12px;">Title</div>
<div class="t" style="left:434.10px;top:233.20px;font-size:10.6px;line-height:14px;color:#000;font-weight:bold;font-style:normal;-webkit-text-stroke:0.12px;">In</div>
<div class="t" style="left:46.60px;top:250.35px;font-size:10.1px;line-height:13px;color:#0a0a0a;font-weight:normal;font-style:normal;transform:scaleX(1.0205);transform-origin:0 50%;-webkit-text-stroke:0.12px;">Hofschröer, Peter.</div>
<div class="t" style="left:145.70px;top:250.35px;font-size:10.1px;line-height:13px;color:#0a0a0a;font-weight:normal;font-style:italic;transform:scaleX(1.0141);transform-origin:0 50%;-webkit-text-stroke:0.12px;">1815: The Waterloo Campaign</div>
<div class="t" style="left:434.10px;top:250.35px;font-size:10.1px;line-height:13px;color:#0a0a0a;font-weight:normal;font-style:normal;-webkit-text-stroke:0.12px;">DC</div>
<div class="t" style="left:46.60px;top:265.75px;font-size:10.1px;line-height:13px;color:#0a0a0a;font-weight:normal;font-style:normal;transform:scaleX(0.9706);transform-origin:0 50%;-webkit-text-stroke:0.12px;">Latimer, Jon</div>
<div class="t" style="left:145.70px;top:265.75px;font-size:10.1px;line-height:13px;color:#0a0a0a;font-weight:normal;font-style:italic;transform:scaleX(1.0277);transform-origin:0 50%;-webkit-text-stroke:0.12px;">Alamein</div>
<div class="t" style="left:434.10px;top:265.75px;font-size:10.1px;line-height:13px;color:#0a0a0a;font-weight:normal;font-style:normal;transform:scaleX(0.9834);transform-origin:0 50%;-webkit-text-stroke:0.12px;">D766.9 .L38 2002b</div>
<div class="t" style="left:46.60px;top:281.15px;font-size:10.1px;line-height:13px;color:#0a0a0a;font-weight:normal;font-style:normal;transform:scaleX(0.9547);transform-origin:0 50%;-webkit-text-stroke:0.12px;">Clemens, Martin</div>
<div class="t" style="left:145.70px;top:281.15px;font-size:10.1px;line-height:13px;color:#0a0a0a;font-weight:normal;font-style:italic;transform:scaleX(1.0153);transform-origin:0 50%;-webkit-text-stroke:0.12px;">Alone on Guadalcanal: A Coastwatcher's Story</div>
<div class="t" style="left:434.10px;top:281.15px;font-size:10.1px;line-height:13px;color:#0a0a0a;font-weight:normal;font-style:normal;transform:scaleX(0.9783);transform-origin:0 50%;-webkit-text-stroke:0.12px;">D767.98 .C53 1998</div>
<div class="t" style="left:46.60px;top:296.55px;font-size:10.1px;line-height:13px;color:#0a0a0a;font-weight:normal;font-style:normal;transform:scaleX(0.9711);transform-origin:0 50%;-webkit-text-stroke:0.12px;">Mencken</div>
<div class="t" style="left:145.70px;top:296.55px;font-size:10.1px;line-height:13px;color:#0a0a0a;font-weight:normal;font-style:italic;transform:scaleX(1.0099);transform-origin:0 50%;-webkit-text-stroke:0.12px;">American Language</div>
<div class="t" style="left:434.10px;top:296.55px;font-size:10.1px;line-height:13px;color:#0a0a0a;font-weight:normal;font-style:normal;transform:scaleX(0.9498);transform-origin:0 50%;-webkit-text-stroke:0.12px;">PE2808 .M4 1936</div>
<div class="t" style="left:46.60px;top:311.95px;font-size:10.1px;line-height:13px;color:#0a0a0a;font-weight:normal;font-style:normal;transform:scaleX(0.9936);transform-origin:0 50%;-webkit-text-stroke:0.12px;">Stansell</div>
<div class="t" style="left:145.70px;top:311.95px;font-size:10.1px;line-height:13px;color:#0a0a0a;font-weight:normal;font-style:italic;transform:scaleX(1.0205);transform-origin:0 50%;-webkit-text-stroke:0.12px;">American Moderns</div>
<div class="t" style="left:434.10px;top:311.95px;font-size:10.1px;line-height:13px;color:#0a0a0a;font-weight:normal;font-style:normal;transform:scaleX(0.9788);transform-origin:0 50%;-webkit-text-stroke:0.12px;">F128.5 .S79 2000</div>
<div class="t" style="left:46.60px;top:327.35px;font-size:10.1px;line-height:13px;color:#0a0a0a;font-weight:normal;font-style:normal;transform:scaleX(0.9855);transform-origin:0 50%;-webkit-text-stroke:0.12px;">Walker</div>
<div class="t" style="left:145.70px;top:327.35px;font-size:10.1px;line-height:13px;color:#0a0a0a;font-weight:normal;font-style:italic;transform:scaleX(1.0314);transform-origin:0 50%;-webkit-text-stroke:0.12px;">American Shelter</div>
<div class="t" style="left:434.10px;top:327.35px;font-size:10.1px;line-height:13px;color:#0a0a0a;font-weight:normal;font-style:normal;transform:scaleX(0.9847);transform-origin:0 50%;-webkit-text-stroke:0.12px;">NA7205 .W34 1996 (Planning)</div>
<div class="t" style="left:46.60px;top:342.75px;font-size:10.1px;line-height:13px;color:#0a0a0a;font-weight:normal;font-style:normal;transform:scaleX(1.0284);transform-origin:0 50%;-webkit-text-stroke:0.12px;">Conaway</div>
<div class="t" style="left:145.70px;top:342.75px;font-size:10.1px;line-height:13px;color:#0a0a0a;font-weight:normal;font-style:italic;transform:scaleX(1.0476);transform-origin:0 50%;-webkit-text-stroke:0.12px;">America's Library</div>
<div class="t" style="left:434.10px;top:342.75px;font-size:10.1px;line-height:13px;color:#0a0a0a;font-weight:normal;font-style:normal;transform:scaleX(0.9795);transform-origin:0 50%;-webkit-text-stroke:0.12px;">Z733.U6 C595 2000</div>
<div class="t" style="left:46.60px;top:358.15px;font-size:10.1px;line-height:13px;color:#0a0a0a;font-weight:normal;font-style:normal;transform:scaleX(0.9580);transform-origin:0 50%;-webkit-text-stroke:0.12px;">Gutjahr, Paul C.</div>
<div class="t" style="left:145.70px;top:358.15px;font-size:10.1px;line-height:13px;color:#0a0a0a;font-weight:normal;font-style:italic;transform:scaleX(1.0183);transform-origin:0 50%;-webkit-text-stroke:0.12px;">An American Bible: A History of the Good Book in the United</div>
<div class="t" style="left:145.70px;top:373.55px;font-size:10.1px;line-height:13px;color:#0a0a0a;font-weight:normal;font-style:italic;transform:scaleX(1.0055);transform-origin:0 50%;-webkit-text-stroke:0.12px;">States, 1777-1880</div>
<div class="t" style="left:434.10px;top:358.15px;font-size:10.1px;line-height:13px;color:#0a0a0a;font-weight:normal;font-style:normal;transform:scaleX(0.9770);transform-origin:0 50%;-webkit-text-stroke:0.12px;">BS447.5.U6 G88 1999</div>
<div class="t" style="left:46.60px;top:388.95px;font-size:10.1px;line-height:13px;color:#0a0a0a;font-weight:normal;font-style:normal;transform:scaleX(0.9649);transform-origin:0 50%;-webkit-text-stroke:0.12px;">Carter, Jimmy</div>
<div class="t" style="left:145.70px;top:388.95px;font-size:10.1px;line-height:13px;color:#0a0a0a;font-weight:normal;font-style:italic;transform:scaleX(1.0118);transform-origin:0 50%;-webkit-text-stroke:0.12px;">An Hour Before Daylight</div>
<div class="t" style="left:434.10px;top:388.95px;font-size:10.1px;line-height:13px;color:#0a0a0a;font-weight:normal;font-style:normal;transform:scaleX(0.9575);transform-origin:0 50%;-webkit-text-stroke:0.12px;">E873 .C36 2001</div>
<div class="t" style="left:46.60px;top:404.35px;font-size:10.1px;line-height:13px;color:#0a0a0a;font-weight:normal;font-style:normal;transform:scaleX(0.9508);transform-origin:0 50%;-webkit-text-stroke:0.12px;">Solomon</div>
<div class="t" style="left:145.70px;top:404.35px;font-size:10.1px;line-height:13px;color:#0a0a0a;font-weight:normal;font-style:italic;transform:scaleX(1.0243);transform-origin:0 50%;-webkit-text-stroke:0.12px;">Ancient World in the Cinema</div>
<div class="t" style="left:434.10px;top:404.35px;font-size:10.1px;line-height:13px;color:#0a0a0a;font-weight:normal;font-style:normal;transform:scaleX(0.9577);transform-origin:0 50%;-webkit-text-stroke:0.12px;">PN1995.9.H5 S6 2001</div>
<div class="t" style="left:46.60px;top:419.75px;font-size:10.1px;line-height:13px;color:#0a0a0a;font-weight:normal;font-style:normal;transform:scaleX(0.9850);transform-origin:0 50%;-webkit-text-stroke:0.12px;">McGinn, Bernard</div>
<div class="t" style="left:145.70px;top:419.75px;font-size:10.1px;line-height:13px;color:#0a0a0a;font-weight:normal;font-style:italic;transform:scaleX(1.0241);transform-origin:0 50%;-webkit-text-stroke:0.12px;">Antichrist: Two Thousand Years of the Human Fascination</div>
<div class="t" style="left:145.70px;top:435.15px;font-size:10.1px;line-height:13px;color:#0a0a0a;font-weight:normal;font-style:italic;transform:scaleX(1.0124);transform-origin:0 50%;-webkit-text-stroke:0.12px;">with Evil</div>
<div class="t" style="left:434.10px;top:419.75px;font-size:10.1px;line-height:13px;color:#0a0a0a;font-weight:normal;font-style:normal;transform:scaleX(0.9665);transform-origin:0 50%;-webkit-text-stroke:0.12px;">BT985 .M29 1994</div>
<div class="t" style="left:46.60px;top:450.55px;font-size:10.1px;line-height:13px;color:#0a0a0a;font-weight:normal;font-style:normal;transform:scaleX(0.9800);transform-origin:0 50%;-webkit-text-stroke:0.12px;">Weber, Eugen J.</div>
<div class="t" style="left:145.70px;top:450.55px;font-size:10.1px;line-height:13px;color:#0a0a0a;font-weight:normal;font-style:italic;transform:scaleX(1.0308);transform-origin:0 50%;-webkit-text-stroke:0.12px;">Apocalypses: Prophecies, Cults, and Millennial Beliefs</div>
<div class="t" style="left:145.70px;top:465.95px;font-size:10.1px;line-height:13px;color:#0a0a0a;font-weight:normal;font-style:italic;transform:scaleX(1.0058);transform-origin:0 50%;-webkit-text-stroke:0.12px;">through the Ages</div>
<div class="t" style="left:434.10px;top:450.55px;font-size:10.1px;line-height:13px;color:#0a0a0a;font-weight:normal;font-style:normal;transform:scaleX(0.9881);transform-origin:0 50%;-webkit-text-stroke:0.12px;">BL503 .W43 1999</div>
<div class="t" style="left:46.60px;top:481.35px;font-size:10.1px;line-height:13px;color:#0a0a0a;font-weight:normal;font-style:normal;transform:scaleX(0.9862);transform-origin:0 50%;-webkit-text-stroke:0.12px;">AbiFares, Huda</div>
<div class="t" style="left:145.70px;top:481.35px;font-size:10.1px;line-height:13px;color:#0a0a0a;font-weight:normal;font-style:italic;transform:scaleX(1.0331);transform-origin:0 50%;-webkit-text-stroke:0.12px;">Arabic Typography</div>
<div class="t" style="left:434.10px;top:481.35px;font-size:10.1px;line-height:13px;color:#0a0a0a;font-weight:normal;font-style:normal;transform:scaleX(1.0124);transform-origin:0 50%;-webkit-text-stroke:0.12px;">Z251.A6 A254 2001</div>
<div class="t" style="left:46.60px;top:496.75px;font-size:10.1px;line-height:13px;color:#0a0a0a;font-weight:normal;font-style:normal;transform:scaleX(0.9541);transform-origin:0 50%;-webkit-text-stroke:0.12px;">Pollack, Kenneth M.</div>
<div class="t" style="left:145.70px;top:496.75px;font-size:10.1px;line-height:13px;color:#0a0a0a;font-weight:normal;font-style:italic;transform:scaleX(1.0219);transform-origin:0 50%;-webkit-text-stroke:0.12px;">Arabs at War: Military Effectiveness, 1948-1991</div>
<div class="t" style="left:434.10px;top:496.75px;font-size:10.1px;line-height:13px;color:#0a0a0a;font-weight:normal;font-style:normal;transform:scaleX(0.9757);transform-origin:0 50%;-webkit-text-stroke:0.12px;">UA854 .P65 2002</div>
<div class="t" style="left:46.60px;top:512.15px;font-size:10.1px;line-height:13px;color:#0a0a0a;font-weight:normal;font-style:normal;transform:scaleX(0.9774);transform-origin:0 50%;-webkit-text-stroke:0.12px;">Bellesiles</div>
<div class="t" style="left:145.70px;top:512.15px;font-size:10.1px;line-height:13px;color:#0a0a0a;font-weight:normal;font-style:italic;transform:scaleX(1.0285);transform-origin:0 50%;-webkit-text-stroke:0.12px;">Arming America</div>
<div class="t" style="left:434.10px;top:512.15px;font-size:10.1px;line-height:13px;color:#0a0a0a;font-weight:normal;font-style:normal;transform:scaleX(0.9871);transform-origin:0 50%;-webkit-text-stroke:0.12px;">HV8059 .B456 2000</div>
<div class="t" style="left:46.60px;top:527.55px;font-size:10.1px;line-height:13px;color:#0a0a0a;font-weight:normal;font-style:normal;transform:scaleX(0.9924);transform-origin:0 50%;-webkit-text-stroke:0.12px;">Atkinson, Rick</div>
<div class="t" style="left:145.70px;top:527.55px;font-size:10.1px;line-height:13px;color:#0a0a0a;font-weight:normal;font-style:italic;transform:scaleX(1.0109);transform-origin:0 50%;-webkit-text-stroke:0.12px;">Army at Dawn: The War in North Africa, 1942-1943</div>
<div class="t" style="left:434.10px;top:527.55px;font-size:10.1px;line-height:13px;color:#0a0a0a;font-weight:normal;font-style:normal;transform:scaleX(0.9938);transform-origin:0 50%;-webkit-text-stroke:0.12px;">D766.82 .A82 2002</div>
<div class="t" style="left:46.60px;top:542.95px;font-size:10.1px;line-height:13px;color:#0a0a0a;font-weight:normal;font-style:normal;transform:scaleX(0.9742);transform-origin:0 50%;-webkit-text-stroke:0.12px;">Cosmas, Graham</div>
<div class="t" style="left:145.70px;top:542.95px;font-size:10.1px;line-height:13px;color:#0a0a0a;font-weight:normal;font-style:italic;transform:scaleX(1.0075);transform-origin:0 50%;-webkit-text-stroke:0.12px;">Army for Empire</div>
<div class="t" style="left:434.10px;top:542.95px;font-size:10.1px;line-height:13px;color:#2a2ad0;font-weight:normal;font-style:normal;transform:scaleX(0.9617);transform-origin:0 50%;-webkit-text-stroke:0.12px;">E725.3 .C6</div>
<div class="t" style="left:46.60px;top:558.35px;font-size:10.1px;line-height:13px;color:#0a0a0a;font-weight:normal;font-style:normal;transform:scaleX(0.9821);transform-origin:0 50%;-webkit-text-stroke:0.12px;">van Creveld, Martin</div>
<div class="t" style="left:145.70px;top:558.35px;font-size:10.1px;line-height:13px;color:#0a0a0a;font-weight:normal;font-style:italic;transform:scaleX(1.0261);transform-origin:0 50%;-webkit-text-stroke:0.12px;">Art of War: War and Military Thought</div>
<div class="t" style="left:46.60px;top:573.75px;font-size:10.1px;line-height:13px;color:#0a0a0a;font-weight:normal;font-style:normal;transform:scaleX(0.9793);transform-origin:0 50%;-webkit-text-stroke:0.12px;">Kennan</div>
<div class="t" style="left:145.70px;top:573.75px;font-size:10.1px;line-height:13px;color:#0a0a0a;font-weight:normal;font-style:italic;transform:scaleX(1.0051);transform-origin:0 50%;-webkit-text-stroke:0.12px;">At Century's Ending</div>
<div class="t" style="left:434.10px;top:573.75px;font-size:10.1px;line-height:13px;color:#0a0a0a;font-weight:normal;font-style:normal;transform:scaleX(0.9794);transform-origin:0 50%;-webkit-text-stroke:0.12px;">E185.8.S65 K44 1996</div>
<div class="t" style="left:46.60px;top:589.15px;font-size:10.1px;line-height:13px;color:#0a0a0a;font-weight:normal;font-style:normal;transform:scaleX(1.0170);transform-origin:0 50%;-webkit-text-stroke:0.12px;">Fowler, Will</div>
<div class="t" style="left:145.70px;top:589.15px;font-size:10.1px;line-height:13px;color:#0a0a0a;font-weight:normal;font-style:italic;transform:scaleX(1.0193);transform-origin:0 50%;-webkit-text-stroke:0.12px;">Atlas of Eastern Front Battles</div>
<div class="t" style="left:46.60px;top:604.55px;font-size:10.1px;line-height:13px;color:#0a0a0a;font-weight:normal;font-style:normal;transform:scaleX(0.9842);transform-origin:0 50%;-webkit-text-stroke:0.12px;">Gellately, Robert</div>
<div class="t" style="left:145.70px;top:604.55px;font-size:10.1px;line-height:13px;color:#0a0a0a;font-weight:normal;font-style:italic;transform:scaleX(1.0262);transform-origin:0 50%;-webkit-text-stroke:0.12px;">Backing Hitler: Consent and Coercion in Nazi Germany</div>
<div class="t" style="left:434.10px;top:604.55px;font-size:10.1px;line-height:13px;color:#0a0a0a;font-weight:normal;font-style:normal;transform:scaleX(0.9684);transform-origin:0 50%;-webkit-text-stroke:0.12px;">DD256.5 .G45 2001</div>
<div class="t" style="left:46.60px;top:619.95px;font-size:10.1px;line-height:13px;color:#0a0a0a;font-weight:normal;font-style:normal;transform:scaleX(0.9843);transform-origin:0 50%;-webkit-text-stroke:0.12px;">Ambrose, Stephen E.</div>
<div class="t" style="left:145.70px;top:619.95px;font-size:10.1px;line-height:13px;color:#0a0a0a;font-weight:normal;font-style:italic;transform:scaleX(1.0035);transform-origin:0 50%;-webkit-text-stroke:0.12px;">Band of Brothers: E Company, 506th Regiment, 101st</div>
<div class="t" style="left:145.70px;top:635.35px;font-size:10.1px;line-height:13px;color:#0a0a0a;font-weight:normal;font-style:italic;transform:scaleX(1.0248);transform-origin:0 50%;-webkit-text-stroke:0.12px;">Airborne: From Normandy to Hitler's Eagle's Nest</div>
<div class="t" style="left:434.10px;top:619.95px;font-size:10.1px;line-height:13px;color:#0a0a0a;font-weight:normal;font-style:normal;transform:scaleX(0.9922);transform-origin:0 50%;-webkit-text-stroke:0.12px;">D769.347 506th .A57 1992</div>
<div class="t" style="left:46.60px;top:650.75px;font-size:10.1px;line-height:13px;color:#0a0a0a;font-weight:normal;font-style:normal;transform:scaleX(1.0076);transform-origin:0 50%;-webkit-text-stroke:0.12px;">Fletcher, Richard A.</div>
<div class="t" style="left:145.70px;top:650.75px;font-size:10.1px;line-height:13px;color:#0a0a0a;font-weight:normal;font-style:italic;transform:scaleX(1.0254);transform-origin:0 50%;-webkit-text-stroke:0.12px;">Barbarian Conversion : From Paganism to Christianity</div>
<div class="t" style="left:434.10px;top:650.75px;font-size:10.1px;line-height:13px;color:#0a0a0a;font-weight:normal;font-style:normal;transform:scaleX(0.9756);transform-origin:0 50%;-webkit-text-stroke:0.12px;">BR200 F57 1998</div>
<div class="t" style="left:46.60px;top:666.15px;font-size:10.1px;line-height:13px;color:#0a0a0a;font-weight:normal;font-style:normal;transform:scaleX(1.0019);transform-origin:0 50%;-webkit-text-stroke:0.12px;">Armstrong, Karen</div>
<div class="t" style="left:145.70px;top:666.15px;font-size:10.1px;line-height:13px;color:#0a0a0a;font-weight:normal;font-style:italic;transform:scaleX(1.0174);transform-origin:0 50%;-webkit-text-stroke:0.12px;">Battle for God</div>
<div class="t" style="left:434.10px;top:666.15px;font-size:10.1px;line-height:13px;color:#0a0a0a;font-weight:normal;font-style:normal;transform:scaleX(0.9844);transform-origin:0 50%;-webkit-text-stroke:0.12px;">BM390 .A69 2000</div>
<div class="t" style="left:46.60px;top:681.55px;font-size:10.1px;line-height:13px;color:#0a0a0a;font-weight:normal;font-style:normal;transform:scaleX(0.9658);transform-origin:0 50%;-webkit-text-stroke:0.12px;">Glantz, David M.</div>
<div class="t" style="left:145.70px;top:681.55px;font-size:10.1px;line-height:13px;color:#0a0a0a;font-weight:normal;font-style:italic;transform:scaleX(1.0074);transform-origin:0 50%;-webkit-text-stroke:0.12px;">Battle for Leningrad 1941-1944</div>
<div class="t" style="left:434.10px;top:681.55px;font-size:10.1px;line-height:13px;color:#0a0a0a;font-weight:normal;font-style:normal;transform:scaleX(0.9767);transform-origin:0 50%;-webkit-text-stroke:0.12px;">D764.3.L4 G59 2002</div>
<div class="t" style="left:46.60px;top:696.95px;font-size:10.1px;line-height:13px;color:#0a0a0a;font-weight:normal;font-style:normal;transform:scaleX(0.9697);transform-origin:0 50%;-webkit-text-stroke:0.12px;">Bierman, John &amp;</div>
<div class="t" style="left:145.70px;top:696.95px;font-size:10.1px;line-height:13px;color:#0a0a0a;font-weight:normal;font-style:italic;transform:scaleX(1.0174);transform-origin:0 50%;-webkit-text-stroke:0.12px;">Battle of Alamein</div>
<div class="t" style="left:434.10px;top:696.95px;font-size:10.1px;line-height:13px;color:#0a0a0a;font-weight:normal;font-style:normal;transform:scaleX(0.9813);transform-origin:0 50%;-webkit-text-stroke:0.12px;">D766.9 .B54 2002</div>
<div class="r" style="left:44px;top:711.2px;width:99px;height:6.0px;overflow:hidden"><div class="t" style="left:2.6px;top:-0.1px;transform:scaleX(0.94);transform-origin:0 50%;font-size:10.1px;line-height:13px;color:#0a0a0a">Colin Smith</div></div>
<svg class="r" style="left:623.70px;top:541.90px;" width="4.2" height="4.6" viewBox="0 0 4.2 4.6"><path d="M0 0H4.2V4.6Z" fill="#d60000"/></svg>
<div class="r" style="left:1270.20px;top:218.30px;width:13.60px;height:499.00px;background:#f0f0f0;"></div>
<div class="r" style="left:1266.50px;top:232.00px;width:1.20px;height:485.00px;background:#c4c4c4;"></div>
<div class="r" style="left:1270.20px;top:218.30px;width:13.60px;height:14.60px;background:#fff;border:1px solid #b2b2b2;"></div>
<svg class="r" style="left:1273.60px;top:222.80px;" width="7" height="5" viewBox="0 0 7 5"><path d="M0 4.4H7L3.5 0.6Z" fill="#6a6a6a"/></svg>
<div class="r" style="left:1270.20px;top:232.90px;width:13.60px;height:25.80px;background:#fff;border:1px solid #b2b2b2;"></div>
<div class="r" style="left:1270.20px;top:702.00px;width:13.60px;height:15.00px;background:#fff;border:1px solid #b2b2b2;"></div>
<svg class="r" style="left:1273.60px;top:707.50px;" width="7" height="5" viewBox="0 0 7 5"><path d="M0 0.6H7L3.5 4.4Z" fill="#6a6a6a"/></svg>
<div class="r" style="left:21.00px;top:717.20px;width:1266.00px;height:28.60px;background:#f4f4f4;"></div>
<div class="r" style="left:21.00px;top:716.80px;width:1246.00px;height:1.20px;background:#bdbdbd;"></div>
<svg class="r" style="left:45.50px;top:727.00px;" width="5" height="8" viewBox="0 0 5 8"><path d="M5 0V8L0.6 4Z" fill="#c6c6c6"/></svg>
<svg class="r" style="left:72.50px;top:727.00px;" width="5" height="8" viewBox="0 0 5 8"><path d="M0 0V8L4.4 4Z" fill="#c6c6c6"/></svg>
<div class="r" style="left:114.40px;top:717.20px;width:112.40px;height:25.40px;background:#ffffff;border-left:1px solid #c6c6c6;border-right:1px solid #c6c6c6;"></div>
<div class="r" style="left:114.40px;top:740.70px;width:112.40px;height:1.80px;background:#217346;"></div>
<div class="t" style="left:125.00px;top:721.10px;font-size:14.5px;line-height:19px;color:#217346;font-weight:bold;font-style:normal;transform:scaleX(0.8094);transform-origin:0 50%;">Sorting Practice</div>
<div class="t" style="left:240.80px;top:722.30px;font-size:14.2px;line-height:18px;color:#444;font-weight:normal;font-style:normal;transform:scaleX(0.8680);transform-origin:0 50%;-webkit-text-stroke:0.15px;">pulling across workbooks</div>
<div class="r" style="left:392.60px;top:721.20px;width:1.60px;height:20.60px;background:#c9c9c9;"></div>
<svg class="r" style="left:423.60px;top:723.30px;" width="16" height="16" viewBox="0 0 16 16"><circle cx="8" cy="8" r="7.2" fill="#fbfbfb" stroke="#777" stroke-width="1.1"/><path d="M8 4.2V11.8M4.2 8H11.8" stroke="#666" stroke-width="1.5"/></svg>
<div class="r" style="left:780.00px;top:727.00px;width:2.00px;height:2.00px;background:#a2a2a2;"></div>
<div class="r" style="left:780.00px;top:731.00px;width:2.00px;height:2.00px;background:#a2a2a2;"></div>
<div class="r" style="left:780.00px;top:735.00px;width:2.00px;height:2.00px;background:#a2a2a2;"></div>
<div class="r" style="left:796.40px;top:724.20px;width:468.40px;height:15.40px;background:#e6e6e6;"></div>
<div class="r" style="left:796.40px;top:724.20px;width:12.80px;height:15.40px;background:#fff;border:1px solid #ababab;"></div>
<svg class="r" style="left:800.40px;top:728.20px;" width="4" height="7" viewBox="0 0 4 7"><path d="M3.8 0V7L0.2 3.5Z" fill="#666"/></svg>
<div class="r" style="left:809.20px;top:724.20px;width:407.20px;height:15.40px;background:#fff;border:1px solid #ababab;"></div>
<div class="r" style="left:1252.00px;top:724.20px;width:12.80px;height:15.40px;background:#fff;border:1px solid #ababab;"></div>
<svg class="r" style="left:1256.60px;top:728.20px;" width="4" height="7" viewBox="0 0 4 7"><path d="M0.2 0V7L3.8 3.5Z" fill="#666"/></svg>
<div class="r" style="left:21.00px;top:745.80px;width:1266.00px;height:23.20px;background:#217346;"></div>
<div class="t" style="left:27.60px;top:750.30px;font-size:10.8px;line-height:14px;color:#ffffff;font-weight:normal;font-style:normal;transform:scaleX(0.8197);transform-origin:0 50%;-webkit-text-stroke:0.2px;">READY</div>
<div class="t" style="left:936.50px;top:750.30px;font-size:10.8px;line-height:14px;color:#ffffff;font-weight:normal;font-style:normal;transform:scaleX(0.9409);transform-origin:0 50%;-webkit-text-stroke:0.2px;">COUNT: 1127</div>
<div class="r" style="left:1016.00px;top:745.80px;width:36.00px;height:23.20px;background:#19633a;"></div>
<svg class="r" style="left:1027.00px;top:750.00px;" width="13" height="13" viewBox="0 0 13 13"><rect x="0.7" y="0.7" width="11.6" height="11.6" fill="none" stroke="#ffffff" stroke-width="1.3"/><path d="M4.6 0.7V12.3M8.4 0.7V12.3M0.7 4.6H12.3M0.7 8.4H12.3" stroke="#ffffff" stroke-width="1.1"/></svg>
<svg class="r" style="left:1062.50px;top:750.00px;" width="13" height="13" viewBox="0 0 13 13"><rect x="0.7" y="0.7" width="11.6" height="11.6" fill="none" stroke="#ffffff" stroke-width="1.3"/><rect x="3.6" y="3.2" width="5.8" height="6.6" fill="none" stroke="#ffffff" stroke-width="1"/><path d="M5 5.2H8M5 7.6H8" stroke="#ffffff" stroke-width="0.9"/></svg>
<svg class="r" style="left:1098.00px;top:750.00px;" width="13" height="13" viewBox="0 0 13 13"><rect x="0.7" y="0.7" width="11.6" height="11.6" fill="none" stroke="#ffffff" stroke-width="1.3"/><rect x="1.2" y="0.7" width="6.6" height="6.8" fill="#ffffff"/><path d="M4.4 1.4V5.6" stroke="#217346" stroke-width="0.8"/></svg>
<div class="r" style="left:1126.80px;top:756.00px;width:5.20px;height:2.40px;background:#ffffff;"></div>
<div class="r" style="left:1136.50px;top:756.60px;width:92.00px;height:1.10px;background:#ffffff;"></div>
<div class="r" style="left:1180.30px;top:751.00px;width:3.80px;height:11.60px;background:#ffffff;"></div>
<div class="r" style="left:1232.00px;top:756.00px;width:8.40px;height:2.20px;background:#ffffff;"></div>
<div class="r" style="left:1235.10px;top:752.90px;width:2.20px;height:8.40px;background:#ffffff;"></div>
<div class="t" style="left:1254.00px;top:750.30px;font-size:10.8px;line-height:14px;color:#ffffff;font-weight:normal;font-style:normal;transform:scaleX(0.9232);transform-origin:0 50%;-webkit-text-stroke:0.2px;">100%</div>
<div class="r" style="left:445.00px;top:168.80px;width:198.60px;height:101.60px;background:#ffffff;border:1px solid #c3c3c3;box-shadow:1.5px 1.5px 3px rgba(0,0,0,0.2);"></div>
<div class="t" style="left:455.50px;top:176.20px;font-size:12.4px;line-height:16px;color:#444;font-weight:bold;font-style:normal;transform:scaleX(0.8871);transform-origin:0 50%;">Sort</div>
<div class="t" style="left:455.50px;top:201.05px;font-size:12.6px;line-height:16px;color:#555;font-weight:normal;font-style:normal;transform:scaleX(0.8827);transform-origin:0 50%;-webkit-text-stroke:0.15px;">Find values quickly by sorting your</div>
<div class="t" style="left:455.50px;top:215.75px;font-size:12.6px;line-height:16px;color:#555;font-weight:normal;font-style:normal;transform:scaleX(0.8564);transform-origin:0 50%;-webkit-text-stroke:0.15px;">data.</div>
<div class="r" style="left:449.40px;top:238.00px;width:189.40px;height:1.80px;background:#e6e6e6;"></div>
<svg class="r" style="left:454.80px;top:246.10px;" width="15" height="17" viewBox="0 0 15 17"><ellipse cx="7.5" cy="8.4" rx="7.4" ry="8.3" fill="#4079bb"/></svg>
<div class="t" style="left:458.18px;top:245.60px;font-size:13.5px;line-height:18px;color:#fff;font-weight:bold;font-style:normal;">?</div>
<div class="t" style="left:476.20px;top:246.20px;font-size:12.6px;line-height:16px;color:#2e6eb6;font-weight:bold;font-style:normal;transform:scaleX(0.8985);transform-origin:0 50%;">Tell me more</div>
</div></body></html>
